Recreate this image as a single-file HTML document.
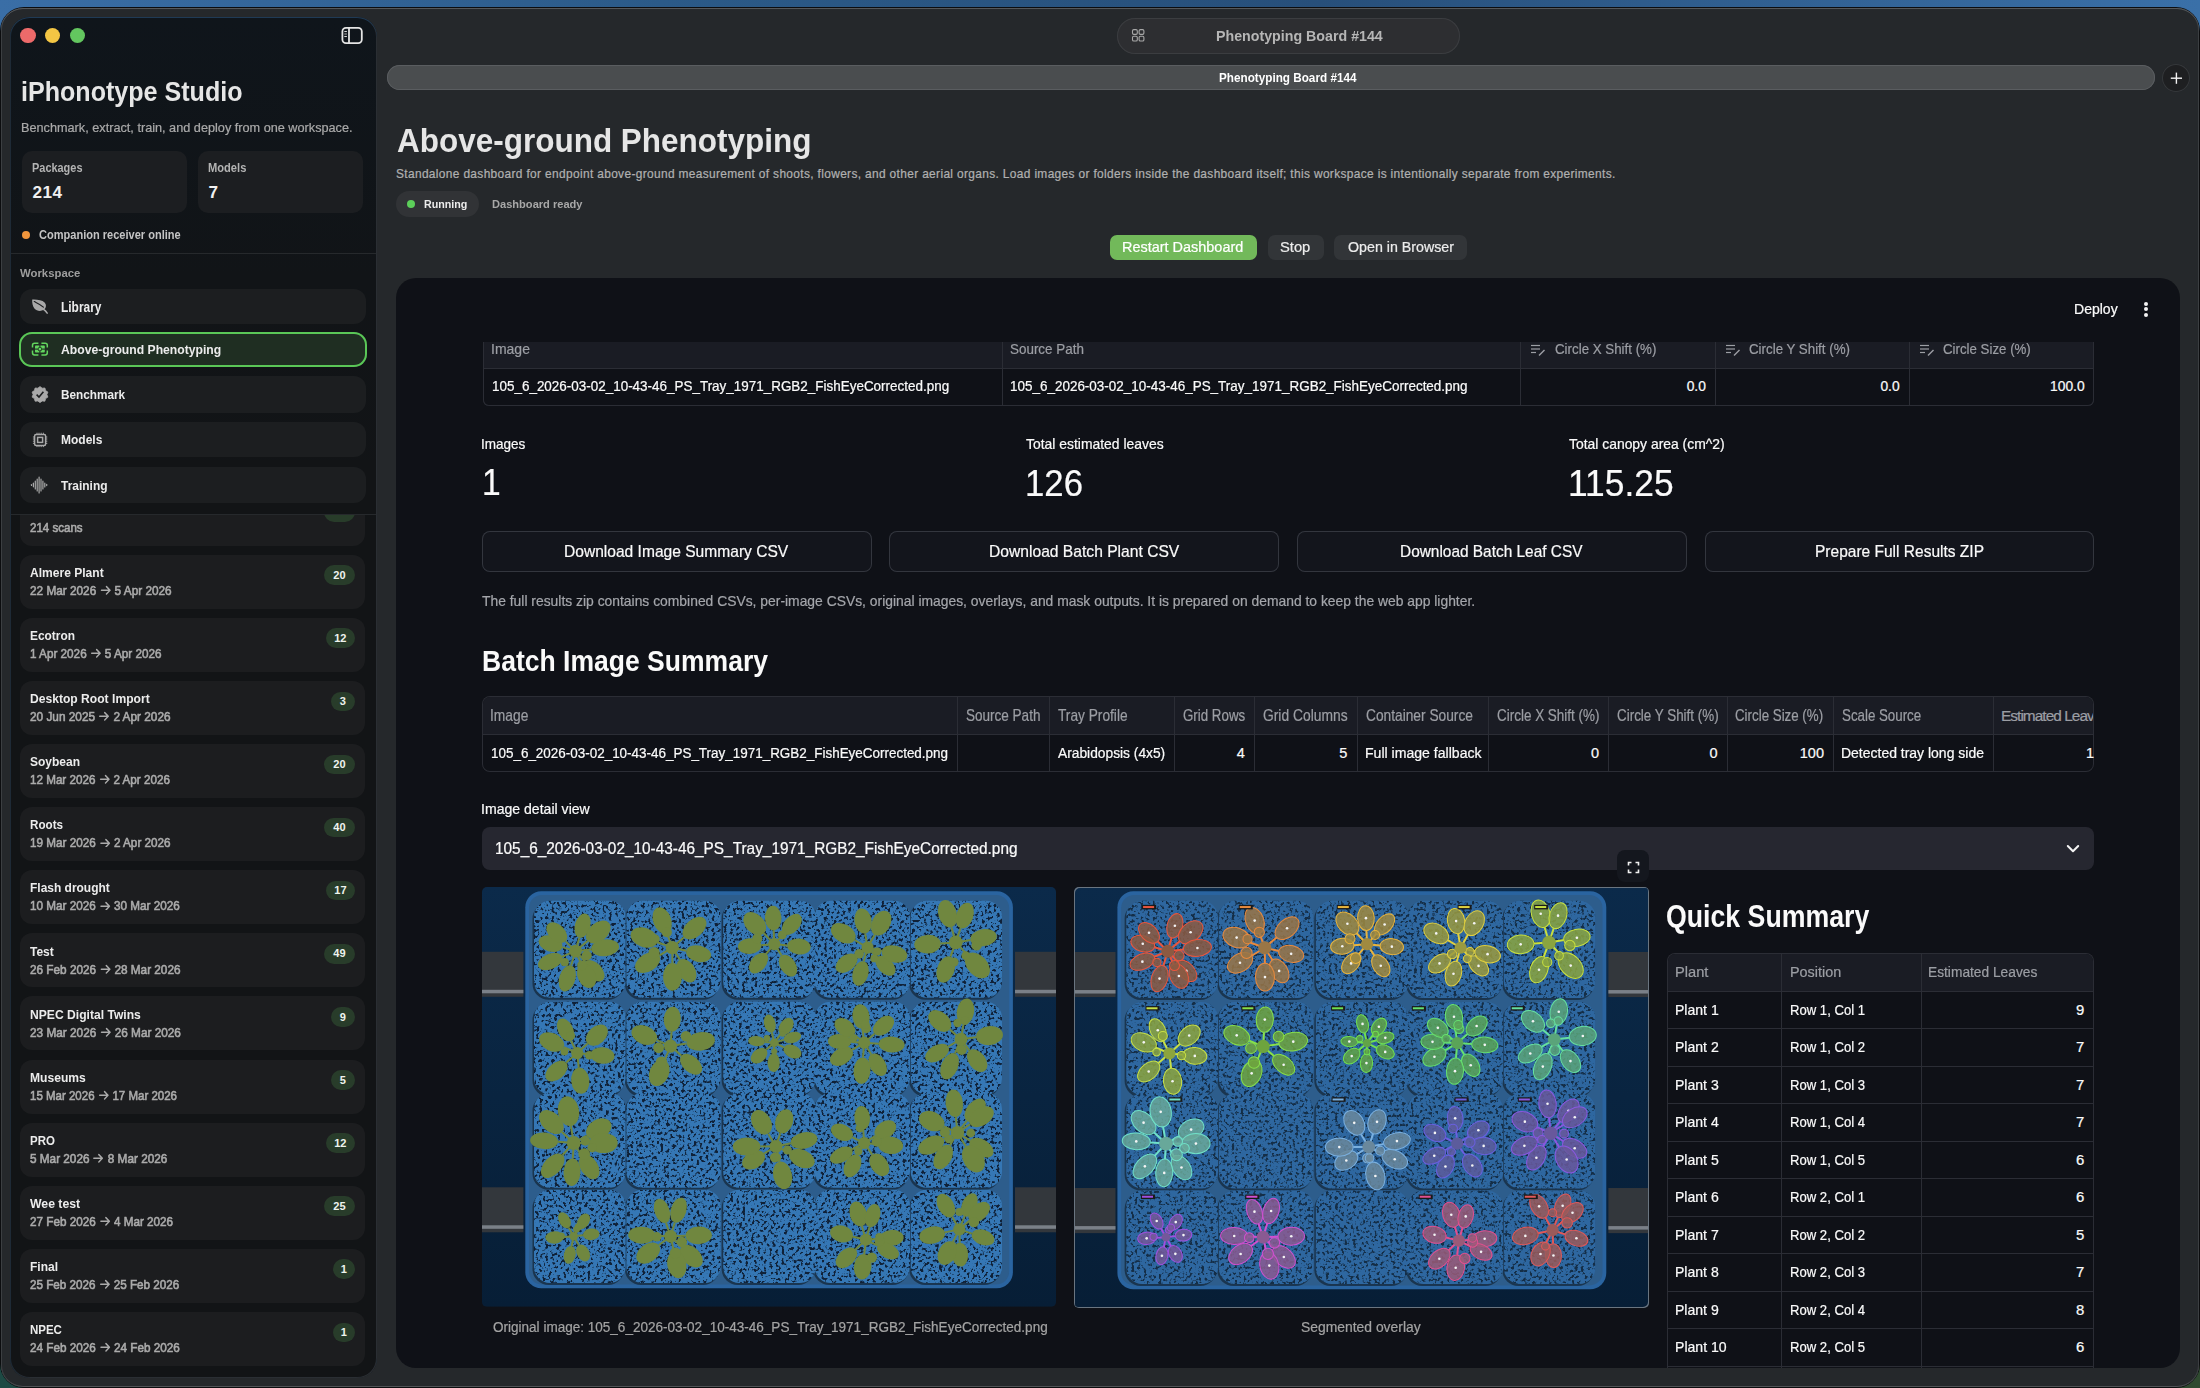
<!DOCTYPE html><html><head><meta charset="utf-8"><style>html,body{margin:0;padding:0;}body{width:2200px;height:1388px;position:relative;overflow:hidden;background:#25282b;font-family:"Liberation Sans",sans-serif;}.t{position:absolute;white-space:nowrap;}.arr{display:inline-block;width:1em;height:0.78em;vertical-align:baseline;}.arr svg{display:block;}</style></head><body><div style="position:absolute;left:0;top:0;width:2200px;height:1388px;background:linear-gradient(90deg,#3a6ea6 0%,#2b5a88 30%,#274f7a 60%,#3a70a8 100%);"></div><div style="position:absolute;left:0;top:1300px;width:2200px;height:88px;background:linear-gradient(90deg,#1d4a44 0%,#20302c 50%,#2f4a30 100%);"></div><div style="position:absolute;left:0px;top:7px;width:2200px;height:1381px;border-radius:24px;background:#0c0d0f;"></div><div style="position:absolute;left:1px;top:8px;width:2197.5px;height:1379px;border-radius:22px;background:#25282b;box-shadow:inset 0 1px 0 #55585b, inset 1px 0 0 #3c3f42, inset -1px 0 0 #3c3f42, inset 0 -1px 0 #505356;"></div><div style="position:absolute;left:9.5px;top:16.5px;width:367px;height:1361px;border-radius:20px;background:linear-gradient(180deg,#0f151b 0px,#111417 260px,#121416 520px);box-shadow:inset 0 1px 0 #1f3a55, inset 1px 0 0 #1e2a36, inset -1px 0 0 #2a2e33, inset 0 -1px 0 #2a2e33;overflow:hidden;"></div><div style="position:absolute;left:19.90px;top:491.60px;width:345.50px;height:54.00px;background:#1c1d1f;border-radius:12px;"></div><div style="position:absolute;left:324.00px;top:502.20px;width:31.00px;height:19.70px;background:#283c2a;border-radius:10px;"></div><span id="t0" class="t" style="left:30.30px;top:521.89px;font-size:12.65px;line-height:12.65px;color:#ababab;-webkit-text-stroke:0.22px currentColor;letter-spacing:0.000px;transform:scaleX(0.9120);transform-origin:0 0;-webkit-text-stroke:0.6px currentColor;">214 scans</span><div style="position:absolute;left:19.90px;top:554.70px;width:345.50px;height:54.00px;background:#1c1d1f;border-radius:12px;"></div><span id="t1" class="t" style="left:30.30px;top:565.90px;font-size:13.23px;line-height:13.23px;color:#ececec;font-weight:700;letter-spacing:0.000px;transform:scaleX(0.9115);transform-origin:0 0;">Almere Plant</span><span id="t2" class="t" style="left:30.30px;top:584.99px;font-size:12.65px;line-height:12.65px;color:#ababab;-webkit-text-stroke:0.22px currentColor;letter-spacing:0.000px;transform:scaleX(0.9332);transform-origin:0 0;-webkit-text-stroke:0.6px currentColor;">22 Mar 2026 <span class="arr"><svg viewBox="0 0 20 16" width="100%" height="100%" preserveAspectRatio="none"><path d="M2.5 8.6 H16.8 M11 2.6 L17 8.6 L11 14.6" stroke="currentColor" stroke-width="2.4" fill="none" stroke-linecap="round" stroke-linejoin="round"/></svg></span> 5 Apr 2026</span><div style="position:absolute;left:323.80px;top:565.30px;width:31.20px;height:19.70px;background:#283c2a;border-radius:10px;"></div><span id="t3" class="t" style="left:-160.60px;width:1000px;text-align:center;top:569.85px;font-size:11.05px;line-height:11.05px;color:#eef3ee;font-weight:700;letter-spacing:0.000px;">20</span><div style="position:absolute;left:19.90px;top:617.80px;width:345.50px;height:54.00px;background:#1c1d1f;border-radius:12px;"></div><span id="t4" class="t" style="left:30.30px;top:629.00px;font-size:13.23px;line-height:13.23px;color:#ececec;font-weight:700;letter-spacing:0.000px;transform:scaleX(0.9005);transform-origin:0 0;">Ecotron</span><span id="t5" class="t" style="left:30.30px;top:648.09px;font-size:12.65px;line-height:12.65px;color:#ababab;-webkit-text-stroke:0.22px currentColor;letter-spacing:0.000px;transform:scaleX(0.9263);transform-origin:0 0;-webkit-text-stroke:0.6px currentColor;">1 Apr 2026 <span class="arr"><svg viewBox="0 0 20 16" width="100%" height="100%" preserveAspectRatio="none"><path d="M2.5 8.6 H16.8 M11 2.6 L17 8.6 L11 14.6" stroke="currentColor" stroke-width="2.4" fill="none" stroke-linecap="round" stroke-linejoin="round"/></svg></span> 5 Apr 2026</span><div style="position:absolute;left:325.70px;top:628.40px;width:29.30px;height:19.70px;background:#283c2a;border-radius:10px;"></div><span id="t6" class="t" style="left:-159.65px;width:1000px;text-align:center;top:632.95px;font-size:11.05px;line-height:11.05px;color:#eef3ee;font-weight:700;letter-spacing:0.000px;">12</span><div style="position:absolute;left:19.90px;top:680.90px;width:345.50px;height:54.00px;background:#1c1d1f;border-radius:12px;"></div><span id="t7" class="t" style="left:30.30px;top:692.10px;font-size:13.23px;line-height:13.23px;color:#ececec;font-weight:700;letter-spacing:0.000px;transform:scaleX(0.9154);transform-origin:0 0;">Desktop Root Import</span><span id="t8" class="t" style="left:30.30px;top:711.19px;font-size:12.65px;line-height:12.65px;color:#ababab;-webkit-text-stroke:0.22px currentColor;letter-spacing:0.000px;transform:scaleX(0.9345);transform-origin:0 0;-webkit-text-stroke:0.6px currentColor;">20 Jun 2025 <span class="arr"><svg viewBox="0 0 20 16" width="100%" height="100%" preserveAspectRatio="none"><path d="M2.5 8.6 H16.8 M11 2.6 L17 8.6 L11 14.6" stroke="currentColor" stroke-width="2.4" fill="none" stroke-linecap="round" stroke-linejoin="round"/></svg></span> 2 Apr 2026</span><div style="position:absolute;left:330.60px;top:691.50px;width:24.40px;height:19.70px;background:#283c2a;border-radius:10px;"></div><span id="t9" class="t" style="left:-157.20px;width:1000px;text-align:center;top:696.05px;font-size:11.05px;line-height:11.05px;color:#eef3ee;font-weight:700;letter-spacing:0.000px;">3</span><div style="position:absolute;left:19.90px;top:744.00px;width:345.50px;height:54.00px;background:#1c1d1f;border-radius:12px;"></div><span id="t10" class="t" style="left:30.30px;top:755.20px;font-size:13.23px;line-height:13.23px;color:#ececec;font-weight:700;letter-spacing:0.000px;transform:scaleX(0.9087);transform-origin:0 0;">Soybean</span><span id="t11" class="t" style="left:30.30px;top:774.29px;font-size:12.65px;line-height:12.65px;color:#ababab;-webkit-text-stroke:0.22px currentColor;letter-spacing:0.000px;transform:scaleX(0.9214);transform-origin:0 0;-webkit-text-stroke:0.6px currentColor;">12 Mar 2026 <span class="arr"><svg viewBox="0 0 20 16" width="100%" height="100%" preserveAspectRatio="none"><path d="M2.5 8.6 H16.8 M11 2.6 L17 8.6 L11 14.6" stroke="currentColor" stroke-width="2.4" fill="none" stroke-linecap="round" stroke-linejoin="round"/></svg></span> 2 Apr 2026</span><div style="position:absolute;left:323.80px;top:754.60px;width:31.20px;height:19.70px;background:#283c2a;border-radius:10px;"></div><span id="t12" class="t" style="left:-160.60px;width:1000px;text-align:center;top:759.15px;font-size:11.05px;line-height:11.05px;color:#eef3ee;font-weight:700;letter-spacing:0.000px;">20</span><div style="position:absolute;left:19.90px;top:807.10px;width:345.50px;height:54.00px;background:#1c1d1f;border-radius:12px;"></div><span id="t13" class="t" style="left:30.30px;top:818.30px;font-size:13.23px;line-height:13.23px;color:#ececec;font-weight:700;letter-spacing:0.000px;transform:scaleX(0.8815);transform-origin:0 0;">Roots</span><span id="t14" class="t" style="left:30.30px;top:837.39px;font-size:12.65px;line-height:12.65px;color:#ababab;-webkit-text-stroke:0.22px currentColor;letter-spacing:0.000px;transform:scaleX(0.9260);transform-origin:0 0;-webkit-text-stroke:0.6px currentColor;">19 Mar 2026 <span class="arr"><svg viewBox="0 0 20 16" width="100%" height="100%" preserveAspectRatio="none"><path d="M2.5 8.6 H16.8 M11 2.6 L17 8.6 L11 14.6" stroke="currentColor" stroke-width="2.4" fill="none" stroke-linecap="round" stroke-linejoin="round"/></svg></span> 2 Apr 2026</span><div style="position:absolute;left:323.80px;top:817.70px;width:31.20px;height:19.70px;background:#283c2a;border-radius:10px;"></div><span id="t15" class="t" style="left:-160.60px;width:1000px;text-align:center;top:822.25px;font-size:11.05px;line-height:11.05px;color:#eef3ee;font-weight:700;letter-spacing:0.000px;">40</span><div style="position:absolute;left:19.90px;top:870.20px;width:345.50px;height:54.00px;background:#1c1d1f;border-radius:12px;"></div><span id="t16" class="t" style="left:30.30px;top:881.40px;font-size:13.23px;line-height:13.23px;color:#ececec;font-weight:700;letter-spacing:0.000px;transform:scaleX(0.9052);transform-origin:0 0;">Flash drought</span><span id="t17" class="t" style="left:30.30px;top:900.49px;font-size:12.65px;line-height:12.65px;color:#ababab;-webkit-text-stroke:0.22px currentColor;letter-spacing:0.000px;transform:scaleX(0.9269);transform-origin:0 0;-webkit-text-stroke:0.6px currentColor;">10 Mar 2026 <span class="arr"><svg viewBox="0 0 20 16" width="100%" height="100%" preserveAspectRatio="none"><path d="M2.5 8.6 H16.8 M11 2.6 L17 8.6 L11 14.6" stroke="currentColor" stroke-width="2.4" fill="none" stroke-linecap="round" stroke-linejoin="round"/></svg></span> 30 Mar 2026</span><div style="position:absolute;left:325.80px;top:880.80px;width:29.20px;height:19.70px;background:#283c2a;border-radius:10px;"></div><span id="t18" class="t" style="left:-159.60px;width:1000px;text-align:center;top:885.35px;font-size:11.05px;line-height:11.05px;color:#eef3ee;font-weight:700;letter-spacing:0.000px;">17</span><div style="position:absolute;left:19.90px;top:933.30px;width:345.50px;height:54.00px;background:#1c1d1f;border-radius:12px;"></div><span id="t19" class="t" style="left:30.30px;top:944.50px;font-size:13.23px;line-height:13.23px;color:#ececec;font-weight:700;letter-spacing:0.000px;transform:scaleX(0.9068);transform-origin:0 0;">Test</span><span id="t20" class="t" style="left:30.30px;top:963.59px;font-size:12.65px;line-height:12.65px;color:#ababab;-webkit-text-stroke:0.22px currentColor;letter-spacing:0.000px;transform:scaleX(0.9312);transform-origin:0 0;-webkit-text-stroke:0.6px currentColor;">26 Feb 2026 <span class="arr"><svg viewBox="0 0 20 16" width="100%" height="100%" preserveAspectRatio="none"><path d="M2.5 8.6 H16.8 M11 2.6 L17 8.6 L11 14.6" stroke="currentColor" stroke-width="2.4" fill="none" stroke-linecap="round" stroke-linejoin="round"/></svg></span> 28 Mar 2026</span><div style="position:absolute;left:323.80px;top:943.90px;width:31.20px;height:19.70px;background:#283c2a;border-radius:10px;"></div><span id="t21" class="t" style="left:-160.60px;width:1000px;text-align:center;top:948.45px;font-size:11.05px;line-height:11.05px;color:#eef3ee;font-weight:700;letter-spacing:0.000px;">49</span><div style="position:absolute;left:19.90px;top:996.40px;width:345.50px;height:54.00px;background:#1c1d1f;border-radius:12px;"></div><span id="t22" class="t" style="left:30.30px;top:1007.60px;font-size:13.23px;line-height:13.23px;color:#ececec;font-weight:700;letter-spacing:0.000px;transform:scaleX(0.9164);transform-origin:0 0;">NPEC Digital Twins</span><span id="t23" class="t" style="left:30.30px;top:1026.69px;font-size:12.65px;line-height:12.65px;color:#ababab;-webkit-text-stroke:0.22px currentColor;letter-spacing:0.000px;transform:scaleX(0.9338);transform-origin:0 0;-webkit-text-stroke:0.6px currentColor;">23 Mar 2026 <span class="arr"><svg viewBox="0 0 20 16" width="100%" height="100%" preserveAspectRatio="none"><path d="M2.5 8.6 H16.8 M11 2.6 L17 8.6 L11 14.6" stroke="currentColor" stroke-width="2.4" fill="none" stroke-linecap="round" stroke-linejoin="round"/></svg></span> 26 Mar 2026</span><div style="position:absolute;left:330.60px;top:1007.00px;width:24.40px;height:19.70px;background:#283c2a;border-radius:10px;"></div><span id="t24" class="t" style="left:-157.20px;width:1000px;text-align:center;top:1011.55px;font-size:11.05px;line-height:11.05px;color:#eef3ee;font-weight:700;letter-spacing:0.000px;">9</span><div style="position:absolute;left:19.90px;top:1059.50px;width:345.50px;height:54.00px;background:#1c1d1f;border-radius:12px;"></div><span id="t25" class="t" style="left:30.30px;top:1070.70px;font-size:13.23px;line-height:13.23px;color:#ececec;font-weight:700;letter-spacing:0.000px;transform:scaleX(0.9139);transform-origin:0 0;">Museums</span><span id="t26" class="t" style="left:30.30px;top:1089.79px;font-size:12.65px;line-height:12.65px;color:#ababab;-webkit-text-stroke:0.22px currentColor;letter-spacing:0.000px;transform:scaleX(0.9096);transform-origin:0 0;-webkit-text-stroke:0.6px currentColor;">15 Mar 2026 <span class="arr"><svg viewBox="0 0 20 16" width="100%" height="100%" preserveAspectRatio="none"><path d="M2.5 8.6 H16.8 M11 2.6 L17 8.6 L11 14.6" stroke="currentColor" stroke-width="2.4" fill="none" stroke-linecap="round" stroke-linejoin="round"/></svg></span> 17 Mar 2026</span><div style="position:absolute;left:330.80px;top:1070.10px;width:24.20px;height:19.70px;background:#283c2a;border-radius:10px;"></div><span id="t27" class="t" style="left:-157.10px;width:1000px;text-align:center;top:1074.65px;font-size:11.05px;line-height:11.05px;color:#eef3ee;font-weight:700;letter-spacing:0.000px;">5</span><div style="position:absolute;left:19.90px;top:1122.60px;width:345.50px;height:54.00px;background:#1c1d1f;border-radius:12px;"></div><span id="t28" class="t" style="left:30.30px;top:1133.80px;font-size:13.23px;line-height:13.23px;color:#ececec;font-weight:700;letter-spacing:0.000px;transform:scaleX(0.8709);transform-origin:0 0;">PRO</span><span id="t29" class="t" style="left:30.30px;top:1152.89px;font-size:12.65px;line-height:12.65px;color:#ababab;-webkit-text-stroke:0.22px currentColor;letter-spacing:0.000px;transform:scaleX(0.9304);transform-origin:0 0;-webkit-text-stroke:0.6px currentColor;">5 Mar 2026 <span class="arr"><svg viewBox="0 0 20 16" width="100%" height="100%" preserveAspectRatio="none"><path d="M2.5 8.6 H16.8 M11 2.6 L17 8.6 L11 14.6" stroke="currentColor" stroke-width="2.4" fill="none" stroke-linecap="round" stroke-linejoin="round"/></svg></span> 8 Mar 2026</span><div style="position:absolute;left:325.70px;top:1133.20px;width:29.30px;height:19.70px;background:#283c2a;border-radius:10px;"></div><span id="t30" class="t" style="left:-159.65px;width:1000px;text-align:center;top:1137.75px;font-size:11.05px;line-height:11.05px;color:#eef3ee;font-weight:700;letter-spacing:0.000px;">12</span><div style="position:absolute;left:19.90px;top:1185.70px;width:345.50px;height:54.00px;background:#1c1d1f;border-radius:12px;"></div><span id="t31" class="t" style="left:30.30px;top:1196.90px;font-size:13.23px;line-height:13.23px;color:#ececec;font-weight:700;letter-spacing:0.000px;transform:scaleX(0.9266);transform-origin:0 0;">Wee test</span><span id="t32" class="t" style="left:30.30px;top:1215.99px;font-size:12.65px;line-height:12.65px;color:#ababab;-webkit-text-stroke:0.22px currentColor;letter-spacing:0.000px;transform:scaleX(0.9256);transform-origin:0 0;-webkit-text-stroke:0.6px currentColor;">27 Feb 2026 <span class="arr"><svg viewBox="0 0 20 16" width="100%" height="100%" preserveAspectRatio="none"><path d="M2.5 8.6 H16.8 M11 2.6 L17 8.6 L11 14.6" stroke="currentColor" stroke-width="2.4" fill="none" stroke-linecap="round" stroke-linejoin="round"/></svg></span> 4 Mar 2026</span><div style="position:absolute;left:323.80px;top:1196.30px;width:31.20px;height:19.70px;background:#283c2a;border-radius:10px;"></div><span id="t33" class="t" style="left:-160.60px;width:1000px;text-align:center;top:1200.85px;font-size:11.05px;line-height:11.05px;color:#eef3ee;font-weight:700;letter-spacing:0.000px;">25</span><div style="position:absolute;left:19.90px;top:1248.80px;width:345.50px;height:54.00px;background:#1c1d1f;border-radius:12px;"></div><span id="t34" class="t" style="left:30.30px;top:1260.00px;font-size:13.23px;line-height:13.23px;color:#ececec;font-weight:700;letter-spacing:0.000px;transform:scaleX(0.9081);transform-origin:0 0;">Final</span><span id="t35" class="t" style="left:30.30px;top:1279.09px;font-size:12.65px;line-height:12.65px;color:#ababab;-webkit-text-stroke:0.22px currentColor;letter-spacing:0.000px;transform:scaleX(0.9231);transform-origin:0 0;-webkit-text-stroke:0.6px currentColor;">25 Feb 2026 <span class="arr"><svg viewBox="0 0 20 16" width="100%" height="100%" preserveAspectRatio="none"><path d="M2.5 8.6 H16.8 M11 2.6 L17 8.6 L11 14.6" stroke="currentColor" stroke-width="2.4" fill="none" stroke-linecap="round" stroke-linejoin="round"/></svg></span> 25 Feb 2026</span><div style="position:absolute;left:332.60px;top:1259.40px;width:22.40px;height:19.70px;background:#283c2a;border-radius:10px;"></div><span id="t36" class="t" style="left:-156.20px;width:1000px;text-align:center;top:1263.95px;font-size:11.05px;line-height:11.05px;color:#eef3ee;font-weight:700;letter-spacing:0.000px;">1</span><div style="position:absolute;left:19.90px;top:1311.90px;width:345.50px;height:54.00px;background:#1c1d1f;border-radius:12px;"></div><span id="t37" class="t" style="left:30.30px;top:1323.10px;font-size:13.23px;line-height:13.23px;color:#ececec;font-weight:700;letter-spacing:0.000px;transform:scaleX(0.8688);transform-origin:0 0;">NPEC</span><span id="t38" class="t" style="left:30.30px;top:1342.19px;font-size:12.65px;line-height:12.65px;color:#ababab;-webkit-text-stroke:0.22px currentColor;letter-spacing:0.000px;transform:scaleX(0.9268);transform-origin:0 0;-webkit-text-stroke:0.6px currentColor;">24 Feb 2026 <span class="arr"><svg viewBox="0 0 20 16" width="100%" height="100%" preserveAspectRatio="none"><path d="M2.5 8.6 H16.8 M11 2.6 L17 8.6 L11 14.6" stroke="currentColor" stroke-width="2.4" fill="none" stroke-linecap="round" stroke-linejoin="round"/></svg></span> 24 Feb 2026</span><div style="position:absolute;left:332.60px;top:1322.50px;width:22.40px;height:19.70px;background:#283c2a;border-radius:10px;"></div><span id="t39" class="t" style="left:-156.20px;width:1000px;text-align:center;top:1327.05px;font-size:11.05px;line-height:11.05px;color:#eef3ee;font-weight:700;letter-spacing:0.000px;">1</span><div style="position:absolute;left:10.5px;top:460px;width:365px;height:54.6px;background:#121416;"></div><div style="position:absolute;left:10.50px;top:514.10px;width:365.00px;height:1.00px;background:#26292c;border-radius:0px;"></div><div style="position:absolute;left:20.40px;top:27.90px;width:15.2px;height:15.2px;border-radius:50%;background:#ed6a6a;"></div><div style="position:absolute;left:45.10px;top:27.90px;width:15.2px;height:15.2px;border-radius:50%;background:#f4c644;"></div><div style="position:absolute;left:69.70px;top:27.90px;width:15.2px;height:15.2px;border-radius:50%;background:#63c65f;"></div><svg style="position:absolute;left:340px;top:26px;" width="24" height="20" viewBox="0 0 24 20"><rect x="2.4" y="1.9" width="19.4" height="15.2" rx="3.6" fill="none" stroke="#e4e4e4" stroke-width="1.8"/><line x1="9" y1="2" x2="9" y2="17" stroke="#e4e4e4" stroke-width="1.8"/><line x1="4.3" y1="5.5" x2="6.9" y2="5.5" stroke="#d8d8d8" stroke-width="1.1"/><line x1="4.3" y1="8" x2="6.9" y2="8" stroke="#a8a8a8" stroke-width="1.1"/><line x1="4.3" y1="10.5" x2="6.9" y2="10.5" stroke="#d8d8d8" stroke-width="1.1"/></svg><span id="t40" class="t" style="left:20.71px;top:77.13px;font-size:28.20px;line-height:28.20px;color:#e6e6e6;font-weight:700;letter-spacing:0.000px;transform:scaleX(0.8896);transform-origin:0 0;">iPhonotype Studio</span><span id="t41" class="t" style="left:21.01px;top:121.97px;font-size:12.79px;line-height:12.79px;color:#a9a9a9;-webkit-text-stroke:0.22px currentColor;letter-spacing:0.000px;transform:scaleX(0.9930);transform-origin:0 0;">Benchmark, extract, train, and deploy from one workspace.</span><div style="position:absolute;left:21.60px;top:151.00px;width:165.40px;height:61.70px;background:#1c1e21;border-radius:10px;"></div><div style="position:absolute;left:198.00px;top:151.00px;width:165.40px;height:61.70px;background:#1c1e21;border-radius:10px;"></div><span id="t42" class="t" style="left:32.40px;top:162.06px;font-size:12.21px;line-height:12.21px;color:#b3b3b3;font-weight:700;letter-spacing:0.000px;transform:scaleX(0.8961);transform-origin:0 0;">Packages</span><span id="t43" class="t" style="left:32.40px;top:184.28px;font-size:17.15px;line-height:17.15px;color:#f0f0f0;font-weight:700;letter-spacing:0.567px;">214</span><span id="t44" class="t" style="left:208.40px;top:162.06px;font-size:12.21px;line-height:12.21px;color:#b3b3b3;font-weight:700;letter-spacing:0.000px;transform:scaleX(0.9122);transform-origin:0 0;">Models</span><span id="t45" class="t" style="left:208.40px;top:184.28px;font-size:17.15px;line-height:17.15px;color:#f0f0f0;font-weight:700;letter-spacing:0.000px;">7</span><div style="position:absolute;left:21.7px;top:230.7px;width:8.6px;height:8.6px;border-radius:50%;background:#f0953c;"></div><span id="t46" class="t" style="left:39.00px;top:228.79px;font-size:12.06px;line-height:12.06px;color:#c4c4c4;font-weight:700;letter-spacing:0.000px;transform:scaleX(0.9165);transform-origin:0 0;">Companion receiver online</span><div style="position:absolute;left:10.50px;top:252.60px;width:365.00px;height:1.00px;background:#26292c;border-radius:0px;"></div><span id="t47" class="t" style="left:19.90px;top:267.58px;font-size:11.48px;line-height:11.48px;color:#9e9e9e;font-weight:700;letter-spacing:0.000px;transform:scaleX(0.9900);transform-origin:0 0;">Workspace</span><div style="position:absolute;left:20.00px;top:289.40px;width:346.00px;height:34.20px;background:#1c1e20;border-radius:12px;"></div><span id="t48" class="t" style="left:60.50px;top:299.54px;font-size:14.24px;line-height:14.24px;color:#ececec;font-weight:700;letter-spacing:0.000px;transform:scaleX(0.8378);transform-origin:0 0;">Library</span><div style="position:absolute;left:19px;top:332px;width:347.5px;height:35px;border-radius:13px;background:#1f2e22;box-shadow:inset 0 0 0 2px #5ac757;"></div><span id="t49" class="t" style="left:60.50px;top:342.85px;font-size:13.52px;line-height:13.52px;color:#ececec;font-weight:700;letter-spacing:0.000px;transform:scaleX(0.9003);transform-origin:0 0;">Above-ground Phenotyping</span><div style="position:absolute;left:20.00px;top:375.50px;width:346.00px;height:37.00px;background:#1c1e20;border-radius:12px;"></div><span id="t50" class="t" style="left:60.50px;top:387.92px;font-size:13.08px;line-height:13.08px;color:#ececec;font-weight:700;letter-spacing:0.000px;transform:scaleX(0.9005);transform-origin:0 0;">Benchmark</span><div style="position:absolute;left:20.00px;top:421.70px;width:346.00px;height:35.60px;background:#1c1e20;border-radius:12px;"></div><span id="t51" class="t" style="left:60.50px;top:433.20px;font-size:13.23px;line-height:13.23px;color:#ececec;font-weight:700;letter-spacing:0.000px;transform:scaleX(0.9074);transform-origin:0 0;">Models</span><div style="position:absolute;left:20.00px;top:466.60px;width:346.00px;height:36.10px;background:#1c1e20;border-radius:12px;"></div><span id="t52" class="t" style="left:60.50px;top:478.62px;font-size:13.08px;line-height:13.08px;color:#ececec;font-weight:700;letter-spacing:0.000px;transform:scaleX(0.9140);transform-origin:0 0;">Training</span><svg style="position:absolute;left:31px;top:298px;" width="18" height="17" viewBox="0 0 18 17"><path d="M1.2 1.6 C6 1.4 11.2 2 13.6 4.6 C15.6 6.8 15.4 10.2 12.8 11.8 C10 13.6 5.6 13.2 3.4 10.4 C1.6 8.2 1 5 1.2 1.6 Z" fill="#a9a9a9"/><path d="M3.2 3.6 C6.4 5.2 9.6 6.4 12.4 9.2" stroke="#1c1e20" stroke-width="1.1" fill="none" stroke-linecap="round"/><path d="M12.2 11.2 C13.8 12.2 15.2 13.6 16.2 15.2" stroke="#a9a9a9" stroke-width="1.5" fill="none" stroke-linecap="round"/></svg><svg style="position:absolute;left:31px;top:342px;" width="18" height="15" viewBox="0 0 18 15"><path d="M1.5 5.6 V3.4 Q1.5 1.3 3.6 1.3 H7.4 M10.4 1.3 H14.2 Q16.3 1.3 16.3 3.4 V5.6 M16.3 8.6 V10.8 Q16.3 12.9 14.2 12.9 H10.4 M7.4 12.9 H3.6 Q1.5 12.9 1.5 10.8 V8.6" stroke="#62d45e" stroke-width="1.5" fill="none"/><rect x="4" y="3.6" width="9.8" height="7" rx="0.8" fill="#62d45e"/><line x1="8.9" y1="3" x2="8.9" y2="11.2" stroke="#1f2e22" stroke-width="1.1"/><line x1="3.6" y1="7.1" x2="14.2" y2="7.1" stroke="#1f2e22" stroke-width="1.1"/><circle cx="8.9" cy="7.1" r="2.2" fill="#1f2e22"/><circle cx="8.9" cy="7.1" r="1.4" fill="#62d45e"/></svg><svg style="position:absolute;left:31px;top:386px;" width="18" height="17" viewBox="0 0 18 17"><path d="M9 0.6 L11.2 2.2 L13.9 2 L14.6 4.6 L16.9 6.1 L15.9 8.6 L16.9 11.1 L14.6 12.6 L13.9 15.2 L11.2 15 L9 16.6 L6.8 15 L4.1 15.2 L3.4 12.6 L1.1 11.1 L2.1 8.6 L1.1 6.1 L3.4 4.6 L4.1 2 L6.8 2.2 Z" fill="#a9a9a9" stroke="#a9a9a9" stroke-width="0.8" stroke-linejoin="round"/><path d="M5.6 8.6 L8 11 L12.4 5.8" stroke="#1c1e20" stroke-width="1.6" fill="none"/></svg><svg style="position:absolute;left:31px;top:431px;" width="18" height="17" viewBox="0 0 18 17"><rect x="3.6" y="3.4" width="11" height="11" rx="1.5" fill="none" stroke="#a9a9a9" stroke-width="1.5"/><rect x="6.6" y="6.4" width="5" height="5" fill="none" stroke="#a9a9a9" stroke-width="1.5"/><line x1="6" y1="1.7" x2="6" y2="3.4" stroke="#a9a9a9" stroke-width="0.9"/><line x1="6" y1="14.4" x2="6" y2="16.1" stroke="#a9a9a9" stroke-width="0.9"/><line x1="8" y1="1.7" x2="8" y2="3.4" stroke="#a9a9a9" stroke-width="0.9"/><line x1="8" y1="14.4" x2="8" y2="16.1" stroke="#a9a9a9" stroke-width="0.9"/><line x1="10.2" y1="1.7" x2="10.2" y2="3.4" stroke="#a9a9a9" stroke-width="0.9"/><line x1="10.2" y1="14.4" x2="10.2" y2="16.1" stroke="#a9a9a9" stroke-width="0.9"/><line x1="12.4" y1="1.7" x2="12.4" y2="3.4" stroke="#a9a9a9" stroke-width="0.9"/><line x1="12.4" y1="14.4" x2="12.4" y2="16.1" stroke="#a9a9a9" stroke-width="0.9"/><line x1="1.9" y1="6" x2="3.6" y2="6" stroke="#a9a9a9" stroke-width="0.9"/><line x1="14.6" y1="6" x2="16.3" y2="6" stroke="#a9a9a9" stroke-width="0.9"/><line x1="1.9" y1="8" x2="3.6" y2="8" stroke="#a9a9a9" stroke-width="0.9"/><line x1="14.6" y1="8" x2="16.3" y2="8" stroke="#a9a9a9" stroke-width="0.9"/><line x1="1.9" y1="10.2" x2="3.6" y2="10.2" stroke="#a9a9a9" stroke-width="0.9"/><line x1="14.6" y1="10.2" x2="16.3" y2="10.2" stroke="#a9a9a9" stroke-width="0.9"/><line x1="1.9" y1="12.4" x2="3.6" y2="12.4" stroke="#a9a9a9" stroke-width="0.9"/><line x1="14.6" y1="12.4" x2="16.3" y2="12.4" stroke="#a9a9a9" stroke-width="0.9"/></svg><svg style="position:absolute;left:30px;top:476px;" width="20" height="18" viewBox="0 0 20 18"><line x1="1.5" y1="8.6" x2="1.5" y2="9.4" stroke="#a9a9a9" stroke-width="1.2" stroke-linecap="round"/><line x1="3.4" y1="7.2" x2="3.4" y2="10.8" stroke="#a9a9a9" stroke-width="1.2" stroke-linecap="round"/><line x1="5.3" y1="5" x2="5.3" y2="13" stroke="#a9a9a9" stroke-width="1.2" stroke-linecap="round"/><line x1="7.2" y1="3" x2="7.2" y2="15" stroke="#a9a9a9" stroke-width="1.2" stroke-linecap="round"/><line x1="9.1" y1="1" x2="9.1" y2="17" stroke="#a9a9a9" stroke-width="1.2" stroke-linecap="round"/><line x1="11" y1="3" x2="11" y2="15" stroke="#a9a9a9" stroke-width="1.2" stroke-linecap="round"/><line x1="12.9" y1="5" x2="12.9" y2="13" stroke="#a9a9a9" stroke-width="1.2" stroke-linecap="round"/><line x1="14.8" y1="7" x2="14.8" y2="11" stroke="#a9a9a9" stroke-width="1.2" stroke-linecap="round"/><line x1="16.7" y1="8.4" x2="16.7" y2="9.6" stroke="#a9a9a9" stroke-width="1.2" stroke-linecap="round"/></svg><div style="position:absolute;left:1117.4px;top:17.9px;width:342.8px;height:36.3px;border-radius:18.2px;background:#2d2e31;box-shadow:inset 0 0 0 1px #3b3d40;"></div><svg style="position:absolute;left:1131px;top:28px;" width="16" height="16" viewBox="0 0 16 16"><rect x="1.5" y="1.6" width="4.8" height="4.8" rx="1.3" fill="none" stroke="#a8a8a8" stroke-width="1.1"/><rect x="1.5" y="8.2" width="4.8" height="4.8" rx="1.3" fill="none" stroke="#a8a8a8" stroke-width="1.1"/><rect x="8.1" y="1.6" width="4.8" height="4.8" rx="1.3" fill="none" stroke="#a8a8a8" stroke-width="1.1"/><rect x="8.1" y="8.2" width="4.8" height="4.8" rx="1.3" fill="none" stroke="#a8a8a8" stroke-width="1.1"/></svg><span id="t53" class="t" style="left:1216.28px;top:28.05px;font-size:15.41px;line-height:15.41px;color:#b6b6b6;font-weight:700;letter-spacing:0.000px;transform:scaleX(0.9233);transform-origin:0 0;">Phenotyping Board #144</span><div style="position:absolute;left:387.2px;top:65.3px;width:1767.6px;height:25.2px;border-radius:13px;background:#4a4d4f;box-shadow:inset 0 0 0 1px #5a5d60;"></div><span id="t54" class="t" style="left:1218.80px;top:72.22px;font-size:12.50px;line-height:12.50px;color:#ffffff;font-weight:700;letter-spacing:0.000px;transform:scaleX(0.9379);transform-origin:0 0;">Phenotyping Board #144</span><div style="position:absolute;left:2162.4px;top:64px;width:28px;height:28px;border-radius:50%;background:#1e1f21;box-shadow:inset 0 0 0 1px #35383b;"></div><svg style="position:absolute;left:2168px;top:70px;" width="17" height="17" viewBox="0 0 17 17"><line x1="8.4" y1="2.6" x2="8.4" y2="13.8" stroke="#f2f2f2" stroke-width="1.4"/><line x1="2.8" y1="8.2" x2="14" y2="8.2" stroke="#f2f2f2" stroke-width="1.4"/></svg><span id="t55" class="t" style="left:397.00px;top:123.75px;font-size:33.72px;line-height:33.72px;color:#e6e6e6;font-weight:700;letter-spacing:0.000px;transform:scaleX(0.9337);transform-origin:0 0;">Above-ground Phenotyping</span><span id="t56" class="t" style="left:396.00px;top:168.81px;font-size:11.92px;line-height:11.92px;color:#b0b0b0;-webkit-text-stroke:0.22px currentColor;letter-spacing:0.349px;">Standalone dashboard for endpoint above-ground measurement of shoots, flowers, and other aerial organs. Load images or folders inside the dashboard itself; this workspace is intentionally separate from experiments.</span><div style="position:absolute;left:396.20px;top:190.90px;width:82.70px;height:26.20px;background:#313336;border-radius:13px;"></div><div style="position:absolute;left:406.6px;top:199.8px;width:8.6px;height:8.6px;border-radius:50%;background:#5ccf5a;"></div><span id="t57" class="t" style="left:424.30px;top:198.15px;font-size:11.63px;line-height:11.63px;color:#ececec;font-weight:700;letter-spacing:0.000px;transform:scaleX(0.9196);transform-origin:0 0;">Running</span><span id="t58" class="t" style="left:492.10px;top:198.15px;font-size:11.63px;line-height:11.63px;color:#a8a8a8;font-weight:700;letter-spacing:0.000px;transform:scaleX(0.9530);transform-origin:0 0;">Dashboard ready</span><div style="position:absolute;left:1109.50px;top:234.50px;width:147.30px;height:25.50px;background:#72b95a;border-radius:7px;"></div><div style="position:absolute;left:1267.50px;top:234.50px;width:56.20px;height:25.50px;background:#323538;border-radius:7px;"></div><div style="position:absolute;left:1334.40px;top:234.50px;width:132.30px;height:25.50px;background:#323538;border-radius:7px;"></div><span id="t59" class="t" style="left:1122.03px;top:239.92px;font-size:14.97px;line-height:14.97px;color:#ffffff;-webkit-text-stroke:0.22px currentColor;letter-spacing:0.000px;transform:scaleX(0.9653);transform-origin:0 0;">Restart Dashboard</span><span id="t60" class="t" style="left:1280.00px;top:239.92px;font-size:14.97px;line-height:14.97px;color:#ececec;-webkit-text-stroke:0.22px currentColor;letter-spacing:0.000px;transform:scaleX(0.9846);transform-origin:0 0;">Stop</span><span id="t61" class="t" style="left:1347.50px;top:239.92px;font-size:14.97px;line-height:14.97px;color:#ececec;-webkit-text-stroke:0.22px currentColor;letter-spacing:0.000px;transform:scaleX(0.9507);transform-origin:0 0;">Open in Browser</span><div style="position:absolute;left:396.00px;top:277.50px;width:1784.00px;height:1090.50px;background:#0f1117;border-radius:20px;"></div><span id="t62" class="t" style="left:2074.29px;top:300.95px;font-size:15.41px;line-height:15.41px;color:#fafafa;-webkit-text-stroke:0.22px currentColor;letter-spacing:0.000px;transform:scaleX(0.9108);transform-origin:0 0;">Deploy</span><div style="position:absolute;left:2144.20px;top:301.90px;width:4.2px;height:4.2px;border-radius:50%;background:#f2f2f2;"></div><div style="position:absolute;left:2144.20px;top:307.30px;width:4.2px;height:4.2px;border-radius:50%;background:#f2f2f2;"></div><div style="position:absolute;left:2144.20px;top:312.70px;width:4.2px;height:4.2px;border-radius:50%;background:#f2f2f2;"></div><div style="position:absolute;left:482.50px;top:341.60px;width:1611.10px;height:64.30px;border-radius:0 0 6px 6px;background:#0f1117;box-shadow:inset 1px 0 0 #2b2d35,inset -1px 0 0 #2b2d35,inset 0 -1px 0 #2b2d35;"></div><div style="position:absolute;left:483.50px;top:341.60px;width:1609.10px;height:27.30px;background:#1a1c24;border-radius:0px;"></div><div style="position:absolute;left:482.50px;top:368.40px;width:1611.10px;height:1.00px;background:#2b2d35;border-radius:0px;"></div><div style="position:absolute;left:1001.70px;top:341.60px;width:1.00px;height:64.30px;background:#2b2d35;border-radius:0px;"></div><div style="position:absolute;left:1520.10px;top:341.60px;width:1.00px;height:64.30px;background:#2b2d35;border-radius:0px;"></div><div style="position:absolute;left:1714.50px;top:341.60px;width:1.00px;height:64.30px;background:#2b2d35;border-radius:0px;"></div><div style="position:absolute;left:1909.00px;top:341.60px;width:1.00px;height:64.30px;background:#2b2d35;border-radius:0px;"></div><span id="t63" class="t" style="left:490.66px;top:342.32px;font-size:14.97px;line-height:14.97px;color:#9c9ea4;-webkit-text-stroke:0.22px currentColor;letter-spacing:0.000px;transform:scaleX(0.9360);transform-origin:0 0;">Image</span><span id="t64" class="t" style="left:1010.40px;top:342.32px;font-size:14.97px;line-height:14.97px;color:#9c9ea4;-webkit-text-stroke:0.22px currentColor;letter-spacing:0.000px;transform:scaleX(0.8970);transform-origin:0 0;">Source Path</span><span id="t65" class="t" style="left:1555.00px;top:342.32px;font-size:14.97px;line-height:14.97px;color:#9c9ea4;-webkit-text-stroke:0.22px currentColor;letter-spacing:0.000px;transform:scaleX(0.8898);transform-origin:0 0;">Circle X Shift (%)</span><span id="t66" class="t" style="left:1749.40px;top:342.32px;font-size:14.97px;line-height:14.97px;color:#9c9ea4;-webkit-text-stroke:0.22px currentColor;letter-spacing:0.000px;transform:scaleX(0.8898);transform-origin:0 0;">Circle Y Shift (%)</span><span id="t67" class="t" style="left:1943.00px;top:342.32px;font-size:14.97px;line-height:14.97px;color:#9c9ea4;-webkit-text-stroke:0.22px currentColor;letter-spacing:0.000px;transform:scaleX(0.8870);transform-origin:0 0;">Circle Size (%)</span><svg style="position:absolute;left:1530px;top:342px;" width="18" height="16" viewBox="0 0 18 16"><line x1="1" y1="3.5" x2="10" y2="3.5" stroke="#9c9ea4" stroke-width="1.2"/><line x1="1" y1="7" x2="10" y2="7" stroke="#9c9ea4" stroke-width="1.2"/><line x1="1" y1="10.5" x2="6" y2="10.5" stroke="#9c9ea4" stroke-width="1.2"/><line x1="9" y1="13.5" x2="14.5" y2="8" stroke="#9c9ea4" stroke-width="1.5"/></svg><svg style="position:absolute;left:1724.5px;top:342px;" width="18" height="16" viewBox="0 0 18 16"><line x1="1" y1="3.5" x2="10" y2="3.5" stroke="#9c9ea4" stroke-width="1.2"/><line x1="1" y1="7" x2="10" y2="7" stroke="#9c9ea4" stroke-width="1.2"/><line x1="1" y1="10.5" x2="6" y2="10.5" stroke="#9c9ea4" stroke-width="1.2"/><line x1="9" y1="13.5" x2="14.5" y2="8" stroke="#9c9ea4" stroke-width="1.5"/></svg><svg style="position:absolute;left:1919px;top:342px;" width="18" height="16" viewBox="0 0 18 16"><line x1="1" y1="3.5" x2="10" y2="3.5" stroke="#9c9ea4" stroke-width="1.2"/><line x1="1" y1="7" x2="10" y2="7" stroke="#9c9ea4" stroke-width="1.2"/><line x1="1" y1="10.5" x2="6" y2="10.5" stroke="#9c9ea4" stroke-width="1.2"/><line x1="9" y1="13.5" x2="14.5" y2="8" stroke="#9c9ea4" stroke-width="1.5"/></svg><span id="t68" class="t" style="left:491.53px;top:380.31px;font-size:13.81px;line-height:13.81px;color:#fafafa;-webkit-text-stroke:0.22px currentColor;letter-spacing:0.000px;transform:scaleX(0.9749);transform-origin:0 0;">105_6_2026-03-02_10-43-46_PS_Tray_1971_RGB2_FishEyeCorrected.png</span><span id="t69" class="t" style="left:1010.02px;top:380.31px;font-size:13.81px;line-height:13.81px;color:#fafafa;-webkit-text-stroke:0.22px currentColor;letter-spacing:0.000px;transform:scaleX(0.9758);transform-origin:0 0;">105_6_2026-03-02_10-43-46_PS_Tray_1971_RGB2_FishEyeCorrected.png</span><span id="t70" class="t" style="right:494.20px;top:380.32px;font-size:13.80px;line-height:13.80px;color:#fafafa;-webkit-text-stroke:0.22px currentColor;letter-spacing:0.000px;">0.0</span><span id="t71" class="t" style="right:300.40px;top:380.32px;font-size:13.80px;line-height:13.80px;color:#fafafa;-webkit-text-stroke:0.22px currentColor;letter-spacing:0.000px;">0.0</span><span id="t72" class="t" style="right:115.40px;top:380.32px;font-size:13.80px;line-height:13.80px;color:#fafafa;-webkit-text-stroke:0.22px currentColor;letter-spacing:0.000px;">100.0</span><span id="t73" class="t" style="left:481.43px;top:436.13px;font-size:15.55px;line-height:15.55px;color:#fafafa;-webkit-text-stroke:0.22px currentColor;letter-spacing:0.000px;transform:scaleX(0.8704);transform-origin:0 0;">Images</span><span id="t74" class="t" style="left:1025.90px;top:436.13px;font-size:15.55px;line-height:15.55px;color:#fafafa;-webkit-text-stroke:0.22px currentColor;letter-spacing:0.000px;transform:scaleX(0.8945);transform-origin:0 0;">Total estimated leaves</span><span id="t75" class="t" style="left:1569.00px;top:436.13px;font-size:15.55px;line-height:15.55px;color:#fafafa;-webkit-text-stroke:0.22px currentColor;letter-spacing:0.000px;transform:scaleX(0.8942);transform-origin:0 0;">Total canopy area (cm^2)</span><span id="t76" class="t" style="left:481.75px;top:464.93px;font-size:36.34px;line-height:36.34px;color:#fafafa;-webkit-text-stroke:0.22px currentColor;letter-spacing:0.000px;transform:scaleX(0.9235);transform-origin:0 0;">1</span><span id="t77" class="t" style="left:1025.42px;top:464.62px;font-size:37.06px;line-height:37.06px;color:#fafafa;-webkit-text-stroke:0.22px currentColor;letter-spacing:0.000px;transform:scaleX(0.9380);transform-origin:0 0;">126</span><span id="t78" class="t" style="left:1567.59px;top:464.62px;font-size:37.06px;line-height:37.06px;color:#fafafa;-webkit-text-stroke:0.22px currentColor;letter-spacing:0.000px;transform:scaleX(0.9550);transform-origin:0 0;">115.25</span><div style="position:absolute;left:481.80px;top:530.5px;width:390.10px;height:41.4px;border-radius:8px;background:#13151c;box-shadow:inset 0 0 0 1px #33363e;"></div><span id="t79" class="t" style="left:564.09px;top:543.48px;font-size:17.15px;line-height:17.15px;color:#fafafa;-webkit-text-stroke:0.22px currentColor;letter-spacing:0.000px;transform:scaleX(0.9087);transform-origin:0 0;">Download Image Summary CSV</span><div style="position:absolute;left:889.20px;top:530.5px;width:389.80px;height:41.4px;border-radius:8px;background:#13151c;box-shadow:inset 0 0 0 1px #33363e;"></div><span id="t80" class="t" style="left:988.89px;top:543.48px;font-size:17.15px;line-height:17.15px;color:#fafafa;-webkit-text-stroke:0.22px currentColor;letter-spacing:0.000px;transform:scaleX(0.9120);transform-origin:0 0;">Download Batch Plant CSV</span><div style="position:absolute;left:1297.40px;top:530.5px;width:389.50px;height:41.4px;border-radius:8px;background:#13151c;box-shadow:inset 0 0 0 1px #33363e;"></div><span id="t81" class="t" style="left:1400.40px;top:543.48px;font-size:17.15px;line-height:17.15px;color:#fafafa;-webkit-text-stroke:0.22px currentColor;letter-spacing:0.000px;transform:scaleX(0.8992);transform-origin:0 0;">Download Batch Leaf CSV</span><div style="position:absolute;left:1704.50px;top:530.5px;width:389.90px;height:41.4px;border-radius:8px;background:#13151c;box-shadow:inset 0 0 0 1px #33363e;"></div><span id="t82" class="t" style="left:1814.89px;top:543.48px;font-size:17.15px;line-height:17.15px;color:#fafafa;-webkit-text-stroke:0.22px currentColor;letter-spacing:0.000px;transform:scaleX(0.9052);transform-origin:0 0;">Prepare Full Results ZIP</span><span id="t83" class="t" style="left:482.00px;top:592.95px;font-size:15.41px;line-height:15.41px;color:#a4a6ab;-webkit-text-stroke:0.22px currentColor;letter-spacing:0.000px;transform:scaleX(0.9004);transform-origin:0 0;">The full results zip contains combined CSVs, per-image CSVs, original images, overlays, and mask outputs. It is prepared on demand to keep the web app lighter.</span><span id="t84" class="t" style="left:482.20px;top:645.79px;font-size:29.65px;line-height:29.65px;color:#fafafa;font-weight:700;letter-spacing:0.000px;transform:scaleX(0.8950);transform-origin:0 0;">Batch Image Summary</span><div style="position:absolute;left:482.30px;top:696.30px;width:1611.70px;height:75.50px;border-radius:8px;background:#0f1117;box-shadow:inset 0 0 0 1px #2b2d35;"></div><div style="position:absolute;left:483.30px;top:697.30px;width:1609.70px;height:37.00px;border-radius:7px 7px 0 0;background:#1a1c24;"></div><div style="position:absolute;left:482.30px;top:733.80px;width:1611.70px;height:1.00px;background:#2b2d35;border-radius:0px;"></div><div style="position:absolute;left:956.60px;top:696.30px;width:1.00px;height:75.50px;background:#2b2d35;border-radius:0px;"></div><div style="position:absolute;left:1048.80px;top:696.30px;width:1.00px;height:75.50px;background:#2b2d35;border-radius:0px;"></div><div style="position:absolute;left:1173.70px;top:696.30px;width:1.00px;height:75.50px;background:#2b2d35;border-radius:0px;"></div><div style="position:absolute;left:1253.70px;top:696.30px;width:1.00px;height:75.50px;background:#2b2d35;border-radius:0px;"></div><div style="position:absolute;left:1357.00px;top:696.30px;width:1.00px;height:75.50px;background:#2b2d35;border-radius:0px;"></div><div style="position:absolute;left:1487.90px;top:696.30px;width:1.00px;height:75.50px;background:#2b2d35;border-radius:0px;"></div><div style="position:absolute;left:1607.80px;top:696.30px;width:1.00px;height:75.50px;background:#2b2d35;border-radius:0px;"></div><div style="position:absolute;left:1726.50px;top:696.30px;width:1.00px;height:75.50px;background:#2b2d35;border-radius:0px;"></div><div style="position:absolute;left:1832.50px;top:696.30px;width:1.00px;height:75.50px;background:#2b2d35;border-radius:0px;"></div><div style="position:absolute;left:1993.30px;top:696.30px;width:1.00px;height:75.50px;background:#2b2d35;border-radius:0px;"></div><span id="t85" class="t" style="left:490.42px;top:707.81px;font-size:15.70px;line-height:15.70px;color:#9c9ea4;-webkit-text-stroke:0.22px currentColor;letter-spacing:0.000px;transform:scaleX(0.8793);transform-origin:0 0;">Image</span><span id="t86" class="t" style="left:965.50px;top:707.81px;font-size:15.70px;line-height:15.70px;color:#9c9ea4;-webkit-text-stroke:0.22px currentColor;letter-spacing:0.000px;transform:scaleX(0.8620);transform-origin:0 0;">Source Path</span><span id="t87" class="t" style="left:1057.70px;top:707.81px;font-size:15.70px;line-height:15.70px;color:#9c9ea4;-webkit-text-stroke:0.22px currentColor;letter-spacing:0.000px;transform:scaleX(0.8737);transform-origin:0 0;">Tray Profile</span><span id="t88" class="t" style="left:1182.50px;top:707.81px;font-size:15.70px;line-height:15.70px;color:#9c9ea4;-webkit-text-stroke:0.22px currentColor;letter-spacing:0.000px;transform:scaleX(0.8490);transform-origin:0 0;">Grid Rows</span><span id="t89" class="t" style="left:1262.60px;top:707.81px;font-size:15.70px;line-height:15.70px;color:#9c9ea4;-webkit-text-stroke:0.22px currentColor;letter-spacing:0.000px;transform:scaleX(0.8818);transform-origin:0 0;">Grid Columns</span><span id="t90" class="t" style="left:1365.70px;top:707.81px;font-size:15.70px;line-height:15.70px;color:#9c9ea4;-webkit-text-stroke:0.22px currentColor;letter-spacing:0.000px;transform:scaleX(0.8761);transform-origin:0 0;">Container Source</span><span id="t91" class="t" style="left:1496.60px;top:707.81px;font-size:15.70px;line-height:15.70px;color:#9c9ea4;-webkit-text-stroke:0.22px currentColor;letter-spacing:0.000px;transform:scaleX(0.8583);transform-origin:0 0;">Circle X Shift (%)</span><span id="t92" class="t" style="left:1616.50px;top:707.81px;font-size:15.70px;line-height:15.70px;color:#9c9ea4;-webkit-text-stroke:0.22px currentColor;letter-spacing:0.000px;transform:scaleX(0.8549);transform-origin:0 0;">Circle Y Shift (%)</span><span id="t93" class="t" style="left:1735.20px;top:707.81px;font-size:15.70px;line-height:15.70px;color:#9c9ea4;-webkit-text-stroke:0.22px currentColor;letter-spacing:0.000px;transform:scaleX(0.8493);transform-origin:0 0;">Circle Size (%)</span><span id="t94" class="t" style="left:1841.60px;top:707.81px;font-size:15.70px;line-height:15.70px;color:#9c9ea4;-webkit-text-stroke:0.22px currentColor;letter-spacing:0.000px;transform:scaleX(0.8485);transform-origin:0 0;">Scale Source</span><div style="position:absolute;left:1994px;top:697px;width:99px;height:36px;overflow:hidden;"><span id="t95" class="t" style="left:7.00px;top:11.06px;font-size:15.40px;line-height:15.40px;color:#9c9ea4;-webkit-text-stroke:0.22px currentColor;letter-spacing:-0.950px;">Estimated Leaves</span></div><span id="t96" class="t" style="left:491.07px;top:746.09px;font-size:14.53px;line-height:14.53px;color:#fafafa;-webkit-text-stroke:0.22px currentColor;letter-spacing:0.000px;transform:scaleX(0.9264);transform-origin:0 0;">105_6_2026-03-02_10-43-46_PS_Tray_1971_RGB2_FishEyeCorrected.png</span><span id="t97" class="t" style="left:1057.70px;top:746.09px;font-size:14.53px;line-height:14.53px;color:#fafafa;-webkit-text-stroke:0.22px currentColor;letter-spacing:0.000px;transform:scaleX(0.9490);transform-origin:0 0;">Arabidopsis (4x5)</span><span id="t98" class="t" style="right:955.20px;top:746.12px;font-size:14.50px;line-height:14.50px;color:#fafafa;-webkit-text-stroke:0.22px currentColor;letter-spacing:0.000px;">4</span><span id="t99" class="t" style="right:852.70px;top:746.12px;font-size:14.50px;line-height:14.50px;color:#fafafa;-webkit-text-stroke:0.22px currentColor;letter-spacing:0.000px;">5</span><span id="t100" class="t" style="left:1364.73px;top:746.09px;font-size:14.53px;line-height:14.53px;color:#fafafa;-webkit-text-stroke:0.22px currentColor;letter-spacing:0.000px;transform:scaleX(0.9696);transform-origin:0 0;">Full image fallback</span><span id="t101" class="t" style="right:601.00px;top:746.12px;font-size:14.50px;line-height:14.50px;color:#fafafa;-webkit-text-stroke:0.22px currentColor;letter-spacing:0.000px;">0</span><span id="t102" class="t" style="right:482.40px;top:746.12px;font-size:14.50px;line-height:14.50px;color:#fafafa;-webkit-text-stroke:0.22px currentColor;letter-spacing:0.000px;">0</span><span id="t103" class="t" style="right:376.00px;top:746.12px;font-size:14.50px;line-height:14.50px;color:#fafafa;-webkit-text-stroke:0.22px currentColor;letter-spacing:0.000px;">100</span><span id="t104" class="t" style="left:1841.44px;top:746.09px;font-size:14.53px;line-height:14.53px;color:#fafafa;-webkit-text-stroke:0.22px currentColor;letter-spacing:0.000px;transform:scaleX(0.9627);transform-origin:0 0;">Detected tray long side</span><span id="t105" class="t" style="right:106.00px;top:746.12px;font-size:14.50px;line-height:14.50px;color:#fafafa;-webkit-text-stroke:0.22px currentColor;letter-spacing:0.000px;">1</span><span id="t106" class="t" style="left:481.36px;top:801.72px;font-size:14.97px;line-height:14.97px;color:#fafafa;-webkit-text-stroke:0.22px currentColor;letter-spacing:0.000px;transform:scaleX(0.9404);transform-origin:0 0;">Image detail view</span><div style="position:absolute;left:481.90px;top:827.20px;width:1612.10px;height:42.50px;background:#262730;border-radius:8px;"></div><span id="t107" class="t" style="left:495.25px;top:839.92px;font-size:16.28px;line-height:16.28px;color:#fafafa;-webkit-text-stroke:0.22px currentColor;letter-spacing:0.000px;transform:scaleX(0.9452);transform-origin:0 0;">105_6_2026-03-02_10-43-46_PS_Tray_1971_RGB2_FishEyeCorrected.png</span><svg style="position:absolute;left:2064.5px;top:842px;" width="16" height="14" viewBox="0 0 16 14"><path d="M2.8 4 L8 9.2 L13.2 4" stroke="#f4f4f4" stroke-width="2" fill="none" stroke-linecap="round" stroke-linejoin="round"/></svg><svg style="position:absolute;left:482px;top:887.2px;border-radius:5px;" width="574.4" height="419.6" viewBox="0 0 574.4 419.6"><defs><linearGradient id="bga" x1="0" y1="0" x2="0" y2="1"><stop offset="0" stop-color="#0b2a4a"/><stop offset="1" stop-color="#071e36"/></linearGradient><filter id="spa" x="0" y="0" width="100%" height="100%" color-interpolation-filters="sRGB"><feTurbulence type="fractalNoise" baseFrequency="0.33" numOctaves="2" seed="9" result="n"/><feColorMatrix in="n" type="matrix" values="0 0 0 0 0.06  0 0 0 0 0.13  0 0 0 0 0.22  -8 0 0 0 3.75"/></filter><clipPath id="pca"><rect x="52.0" y="13.8" width="91.6" height="97.0" rx="16"/><rect x="52.0" y="114.8" width="91.6" height="92.8" rx="16"/><rect x="52.0" y="205.8" width="91.6" height="95.0" rx="16"/><rect x="52.0" y="302.8" width="91.6" height="93.2" rx="16"/><rect x="144.4" y="13.8" width="94.3" height="97.0" rx="16"/><rect x="144.4" y="114.8" width="94.3" height="92.8" rx="16"/><rect x="144.4" y="205.8" width="94.3" height="95.0" rx="16"/><rect x="144.4" y="302.8" width="94.3" height="93.2" rx="16"/><rect x="241.2" y="13.8" width="92.6" height="97.0" rx="16"/><rect x="241.2" y="114.8" width="92.6" height="92.8" rx="16"/><rect x="241.2" y="205.8" width="92.6" height="95.0" rx="16"/><rect x="241.2" y="302.8" width="92.6" height="93.2" rx="16"/><rect x="332.7" y="13.8" width="95.3" height="97.0" rx="16"/><rect x="332.7" y="114.8" width="95.3" height="92.8" rx="16"/><rect x="332.7" y="205.8" width="95.3" height="95.0" rx="16"/><rect x="332.7" y="302.8" width="95.3" height="93.2" rx="16"/><rect x="428.7" y="13.8" width="91.3" height="97.0" rx="16"/><rect x="428.7" y="114.8" width="91.3" height="92.8" rx="16"/><rect x="428.7" y="205.8" width="91.3" height="95.0" rx="16"/><rect x="428.7" y="302.8" width="91.3" height="93.2" rx="16"/></clipPath></defs><rect width="574.4" height="419.6" fill="url(#bga)"/><rect x="0" y="64.8" width="41.4" height="45" fill="#33373c"/><rect x="0" y="102.8" width="41.4" height="3.5" fill="#7a8088"/><rect x="0" y="300.3" width="41.4" height="45" fill="#33373c"/><rect x="0" y="338.3" width="41.4" height="3.5" fill="#7a8088"/><rect x="533" y="64.8" width="41.39999999999998" height="45" fill="#33373c"/><rect x="533" y="102.8" width="41.39999999999998" height="3.5" fill="#7a8088"/><rect x="533" y="300.3" width="41.39999999999998" height="45" fill="#33373c"/><rect x="533" y="338.3" width="41.39999999999998" height="3.5" fill="#7a8088"/><rect x="43.3" y="4.2" width="487.6" height="397" rx="16" fill="#2a64a0"/><rect x="47" y="7.9" width="480.2" height="389.6" rx="13" fill="#2d5d8c"/><rect x="50.5" y="15.8" width="91.6" height="97.0" rx="16" fill="#0e1a26" opacity="0.6"/><rect x="142.9" y="15.8" width="94.3" height="97.0" rx="16" fill="#0e1a26" opacity="0.6"/><rect x="239.7" y="15.8" width="92.6" height="97.0" rx="16" fill="#0e1a26" opacity="0.6"/><rect x="331.2" y="15.8" width="95.3" height="97.0" rx="16" fill="#0e1a26" opacity="0.6"/><rect x="427.2" y="15.8" width="91.3" height="97.0" rx="16" fill="#0e1a26" opacity="0.6"/><rect x="50.5" y="116.8" width="91.6" height="92.8" rx="16" fill="#0e1a26" opacity="0.6"/><rect x="142.9" y="116.8" width="94.3" height="92.8" rx="16" fill="#0e1a26" opacity="0.6"/><rect x="239.7" y="116.8" width="92.6" height="92.8" rx="16" fill="#0e1a26" opacity="0.6"/><rect x="331.2" y="116.8" width="95.3" height="92.8" rx="16" fill="#0e1a26" opacity="0.6"/><rect x="427.2" y="116.8" width="91.3" height="92.8" rx="16" fill="#0e1a26" opacity="0.6"/><rect x="50.5" y="207.8" width="91.6" height="95.0" rx="16" fill="#0e1a26" opacity="0.6"/><rect x="142.9" y="207.8" width="94.3" height="95.0" rx="16" fill="#0e1a26" opacity="0.6"/><rect x="239.7" y="207.8" width="92.6" height="95.0" rx="16" fill="#0e1a26" opacity="0.6"/><rect x="331.2" y="207.8" width="95.3" height="95.0" rx="16" fill="#0e1a26" opacity="0.6"/><rect x="427.2" y="207.8" width="91.3" height="95.0" rx="16" fill="#0e1a26" opacity="0.6"/><rect x="50.5" y="304.8" width="91.6" height="93.2" rx="16" fill="#0e1a26" opacity="0.6"/><rect x="142.9" y="304.8" width="94.3" height="93.2" rx="16" fill="#0e1a26" opacity="0.6"/><rect x="239.7" y="304.8" width="92.6" height="93.2" rx="16" fill="#0e1a26" opacity="0.6"/><rect x="331.2" y="304.8" width="95.3" height="93.2" rx="16" fill="#0e1a26" opacity="0.6"/><rect x="427.2" y="304.8" width="91.3" height="93.2" rx="16" fill="#0e1a26" opacity="0.6"/><g clip-path="url(#pca)"><rect x="50" y="12" width="472" height="386" fill="#3577b5"/><rect x="50" y="12" width="472" height="386" filter="url(#spa)"/></g><line x1="93.5" y1="64.1" x2="89.1" y2="78.5" stroke="#70873f" stroke-width="2"/><ellipse cx="85.3" cy="91.4" rx="13.4" ry="8.1" transform="rotate(106.8 85.3 91.4)" fill="#70873f"/><line x1="93.5" y1="64.1" x2="80.1" y2="69.6" stroke="#70873f" stroke-width="2"/><ellipse cx="68.2" cy="74.5" rx="12.9" ry="7.7" transform="rotate(157.6 68.2 74.5)" fill="#70873f"/><line x1="93.5" y1="64.1" x2="80.3" y2="60.1" stroke="#70873f" stroke-width="2"/><ellipse cx="68.6" cy="56.6" rx="12.2" ry="7.9" transform="rotate(196.8 68.6 56.6)" fill="#70873f"/><line x1="93.5" y1="64.1" x2="83.6" y2="54.4" stroke="#70873f" stroke-width="2"/><ellipse cx="74.8" cy="45.7" rx="12.3" ry="8.0" transform="rotate(224.5 74.8 45.7)" fill="#70873f"/><line x1="93.5" y1="64.1" x2="97.3" y2="50.7" stroke="#70873f" stroke-width="2"/><ellipse cx="100.6" cy="38.7" rx="12.4" ry="7.7" transform="rotate(285.7 100.6 38.7)" fill="#70873f"/><line x1="93.5" y1="64.1" x2="105.6" y2="54.0" stroke="#70873f" stroke-width="2"/><ellipse cx="116.3" cy="45.1" rx="14.0" ry="9.3" transform="rotate(320.1 116.3 45.1)" fill="#70873f"/><line x1="93.5" y1="64.1" x2="109.2" y2="62.4" stroke="#70873f" stroke-width="2"/><ellipse cx="123.1" cy="60.8" rx="14.0" ry="8.4" transform="rotate(353.7 123.1 60.8)" fill="#70873f"/><line x1="93.5" y1="64.1" x2="103.3" y2="74.5" stroke="#70873f" stroke-width="2"/><ellipse cx="112.1" cy="83.7" rx="12.7" ry="7.8" transform="rotate(406.6 112.1 83.7)" fill="#70873f"/><line x1="93.5" y1="64.1" x2="99.4" y2="77.2" stroke="#70873f" stroke-width="2"/><ellipse cx="104.6" cy="88.8" rx="12.8" ry="8.9" transform="rotate(425.9 104.6 88.8)" fill="#70873f"/><circle cx="100.2" cy="78.4" r="5.0" fill="#70873f"/><circle cx="82.7" cy="75.2" r="4.1" fill="#70873f"/><circle cx="104.7" cy="68.5" r="5.1" fill="#70873f"/><circle cx="93.5" cy="64.1" r="6.4" fill="#70873f"/><line x1="190.3" y1="60.6" x2="177.2" y2="68.6" stroke="#70873f" stroke-width="2"/><ellipse cx="165.6" cy="75.6" rx="13.6" ry="8.9" transform="rotate(148.7 165.6 75.6)" fill="#70873f"/><line x1="190.3" y1="60.6" x2="175.4" y2="55.3" stroke="#70873f" stroke-width="2"/><ellipse cx="162.2" cy="50.5" rx="14.0" ry="9.6" transform="rotate(199.8 162.2 50.5)" fill="#70873f"/><line x1="190.3" y1="60.6" x2="185.0" y2="46.3" stroke="#70873f" stroke-width="2"/><ellipse cx="180.2" cy="33.5" rx="13.6" ry="9.0" transform="rotate(249.6 180.2 33.5)" fill="#70873f"/><line x1="190.3" y1="60.6" x2="202.1" y2="50.3" stroke="#70873f" stroke-width="2"/><ellipse cx="212.5" cy="41.1" rx="13.9" ry="8.8" transform="rotate(318.7 212.5 41.1)" fill="#70873f"/><line x1="190.3" y1="60.6" x2="204.2" y2="63.8" stroke="#70873f" stroke-width="2"/><ellipse cx="216.6" cy="66.7" rx="12.7" ry="8.2" transform="rotate(373.1 216.6 66.7)" fill="#70873f"/><line x1="190.3" y1="60.6" x2="197.9" y2="72.8" stroke="#70873f" stroke-width="2"/><ellipse cx="204.6" cy="83.7" rx="12.8" ry="8.4" transform="rotate(418.3 204.6 83.7)" fill="#70873f"/><line x1="190.3" y1="60.6" x2="190.4" y2="76.1" stroke="#70873f" stroke-width="2"/><ellipse cx="190.5" cy="89.9" rx="13.8" ry="9.5" transform="rotate(449.6 190.5 89.9)" fill="#70873f"/><circle cx="173.1" cy="52.1" r="4.6" fill="#70873f"/><circle cx="184.8" cy="45.2" r="5.1" fill="#70873f"/><circle cx="172.1" cy="65.7" r="5.6" fill="#70873f"/><circle cx="190.3" cy="60.6" r="6.6" fill="#70873f"/><line x1="292.3" y1="57.1" x2="279.2" y2="58.2" stroke="#70873f" stroke-width="2"/><ellipse cx="267.6" cy="59.1" rx="11.7" ry="7.9" transform="rotate(175.3 267.6 59.1)" fill="#70873f"/><line x1="292.3" y1="57.1" x2="281.9" y2="46.2" stroke="#70873f" stroke-width="2"/><ellipse cx="272.7" cy="36.6" rx="13.4" ry="9.3" transform="rotate(226.2 272.7 36.6)" fill="#70873f"/><line x1="292.3" y1="57.1" x2="291.7" y2="43.3" stroke="#70873f" stroke-width="2"/><ellipse cx="291.2" cy="31.1" rx="12.3" ry="8.3" transform="rotate(267.5 291.2 31.1)" fill="#70873f"/><line x1="292.3" y1="57.1" x2="301.6" y2="46.7" stroke="#70873f" stroke-width="2"/><ellipse cx="309.8" cy="37.4" rx="12.4" ry="7.6" transform="rotate(311.6 309.8 37.4)" fill="#70873f"/><line x1="292.3" y1="57.1" x2="305.4" y2="58.4" stroke="#70873f" stroke-width="2"/><ellipse cx="317.0" cy="59.5" rx="11.7" ry="8.0" transform="rotate(365.7 317.0 59.5)" fill="#70873f"/><line x1="292.3" y1="57.1" x2="299.6" y2="68.5" stroke="#70873f" stroke-width="2"/><ellipse cx="306.0" cy="78.6" rx="12.0" ry="7.7" transform="rotate(417.4 306.0 78.6)" fill="#70873f"/><line x1="292.3" y1="57.1" x2="283.9" y2="67.2" stroke="#70873f" stroke-width="2"/><ellipse cx="276.4" cy="76.2" rx="11.7" ry="7.6" transform="rotate(489.6 276.4 76.2)" fill="#70873f"/><circle cx="275.3" cy="51.6" r="5.0" fill="#70873f"/><circle cx="300.3" cy="47.9" r="4.4" fill="#70873f"/><circle cx="281.0" cy="71.0" r="5.3" fill="#70873f"/><circle cx="292.3" cy="57.1" r="6.1" fill="#70873f"/><line x1="385.6" y1="60.6" x2="395.1" y2="70.2" stroke="#70873f" stroke-width="2"/><ellipse cx="403.5" cy="78.7" rx="12.0" ry="7.5" transform="rotate(45.3 403.5 78.7)" fill="#70873f"/><line x1="385.6" y1="60.6" x2="381.8" y2="74.3" stroke="#70873f" stroke-width="2"/><ellipse cx="378.5" cy="86.5" rx="12.6" ry="7.9" transform="rotate(105.3 378.5 86.5)" fill="#70873f"/><line x1="385.6" y1="60.6" x2="374.5" y2="68.9" stroke="#70873f" stroke-width="2"/><ellipse cx="364.6" cy="76.2" rx="12.3" ry="7.9" transform="rotate(143.3 364.6 76.2)" fill="#70873f"/><line x1="385.6" y1="60.6" x2="372.7" y2="53.0" stroke="#70873f" stroke-width="2"/><ellipse cx="361.3" cy="46.3" rx="13.3" ry="9.0" transform="rotate(210.5 361.3 46.3)" fill="#70873f"/><line x1="385.6" y1="60.6" x2="383.2" y2="46.5" stroke="#70873f" stroke-width="2"/><ellipse cx="381.1" cy="34.0" rx="12.7" ry="8.6" transform="rotate(260.5 381.1 34.0)" fill="#70873f"/><line x1="385.6" y1="60.6" x2="392.8" y2="47.6" stroke="#70873f" stroke-width="2"/><ellipse cx="399.2" cy="36.1" rx="13.2" ry="9.1" transform="rotate(299.0 399.2 36.1)" fill="#70873f"/><line x1="385.6" y1="60.6" x2="399.8" y2="64.0" stroke="#70873f" stroke-width="2"/><ellipse cx="412.5" cy="67.0" rx="13.0" ry="8.4" transform="rotate(373.4 412.5 67.0)" fill="#70873f"/><circle cx="377.2" cy="66.8" r="4.8" fill="#70873f"/><circle cx="395.0" cy="64.5" r="4.1" fill="#70873f"/><circle cx="392.3" cy="71.4" r="3.9" fill="#70873f"/><circle cx="385.6" cy="60.6" r="6.1" fill="#70873f"/><line x1="473.8" y1="55.4" x2="488.5" y2="52.9" stroke="#70873f" stroke-width="2"/><ellipse cx="501.6" cy="50.7" rx="13.3" ry="8.5" transform="rotate(-9.7 501.6 50.7)" fill="#70873f"/><line x1="473.8" y1="55.4" x2="485.3" y2="67.6" stroke="#70873f" stroke-width="2"/><ellipse cx="495.4" cy="78.4" rx="14.9" ry="10.0" transform="rotate(46.8 495.4 78.4)" fill="#70873f"/><line x1="473.8" y1="55.4" x2="468.5" y2="69.7" stroke="#70873f" stroke-width="2"/><ellipse cx="463.8" cy="82.5" rx="13.6" ry="8.7" transform="rotate(110.2 463.8 82.5)" fill="#70873f"/><line x1="473.8" y1="55.4" x2="458.8" y2="56.4" stroke="#70873f" stroke-width="2"/><ellipse cx="445.5" cy="57.2" rx="13.3" ry="9.3" transform="rotate(176.3 445.5 57.2)" fill="#70873f"/><line x1="473.8" y1="55.4" x2="469.4" y2="40.2" stroke="#70873f" stroke-width="2"/><ellipse cx="465.5" cy="26.7" rx="14.0" ry="9.2" transform="rotate(253.9 465.5 26.7)" fill="#70873f"/><line x1="473.8" y1="55.4" x2="478.5" y2="41.2" stroke="#70873f" stroke-width="2"/><ellipse cx="482.8" cy="28.6" rx="13.3" ry="8.5" transform="rotate(288.5 482.8 28.6)" fill="#70873f"/><circle cx="472.0" cy="75.0" r="4.6" fill="#70873f"/><circle cx="494.6" cy="58.4" r="5.2" fill="#70873f"/><circle cx="483.8" cy="68.6" r="4.3" fill="#70873f"/><circle cx="473.8" cy="55.4" r="6.9" fill="#70873f"/><line x1="95.2" y1="166.1" x2="81.7" y2="160.2" stroke="#70873f" stroke-width="2"/><ellipse cx="69.6" cy="155.0" rx="13.1" ry="8.9" transform="rotate(203.5 69.6 155.0)" fill="#70873f"/><line x1="95.2" y1="166.1" x2="89.1" y2="153.8" stroke="#70873f" stroke-width="2"/><ellipse cx="83.6" cy="142.9" rx="12.2" ry="7.5" transform="rotate(243.4 83.6 142.9)" fill="#70873f"/><line x1="95.2" y1="166.1" x2="105.6" y2="156.6" stroke="#70873f" stroke-width="2"/><ellipse cx="114.9" cy="148.2" rx="12.5" ry="8.7" transform="rotate(317.7 114.9 148.2)" fill="#70873f"/><line x1="95.2" y1="166.1" x2="108.6" y2="167.4" stroke="#70873f" stroke-width="2"/><ellipse cx="120.5" cy="168.5" rx="12.0" ry="8.3" transform="rotate(365.4 120.5 168.5)" fill="#70873f"/><line x1="95.2" y1="166.1" x2="96.8" y2="180.8" stroke="#70873f" stroke-width="2"/><ellipse cx="98.3" cy="193.8" rx="13.1" ry="9.1" transform="rotate(443.7 98.3 193.8)" fill="#70873f"/><line x1="95.2" y1="166.1" x2="84.2" y2="175.6" stroke="#70873f" stroke-width="2"/><ellipse cx="74.5" cy="184.1" rx="12.9" ry="8.0" transform="rotate(499.0 74.5 184.1)" fill="#70873f"/><circle cx="82.4" cy="164.7" r="3.8" fill="#70873f"/><circle cx="107.2" cy="168.2" r="4.2" fill="#70873f"/><circle cx="88.6" cy="148.7" r="4.5" fill="#70873f"/><circle cx="95.2" cy="166.1" r="6.1" fill="#70873f"/><line x1="188.6" y1="159.1" x2="204.5" y2="156.6" stroke="#70873f" stroke-width="2"/><ellipse cx="218.7" cy="154.3" rx="14.3" ry="9.2" transform="rotate(351.0 218.7 154.3)" fill="#70873f"/><line x1="188.6" y1="159.1" x2="199.5" y2="168.7" stroke="#70873f" stroke-width="2"/><ellipse cx="209.1" cy="177.3" rx="12.9" ry="8.0" transform="rotate(401.5 209.1 177.3)" fill="#70873f"/><line x1="188.6" y1="159.1" x2="182.6" y2="173.3" stroke="#70873f" stroke-width="2"/><ellipse cx="177.2" cy="185.9" rx="13.7" ry="9.7" transform="rotate(473.1 177.2 185.9)" fill="#70873f"/><line x1="188.6" y1="159.1" x2="174.7" y2="153.2" stroke="#70873f" stroke-width="2"/><ellipse cx="162.3" cy="148.0" rx="13.4" ry="9.1" transform="rotate(562.9 162.3 148.0)" fill="#70873f"/><line x1="188.6" y1="159.1" x2="189.5" y2="144.9" stroke="#70873f" stroke-width="2"/><ellipse cx="190.3" cy="132.3" rx="12.6" ry="8.5" transform="rotate(633.7 190.3 132.3)" fill="#70873f"/><circle cx="204.0" cy="149.3" r="5.3" fill="#70873f"/><circle cx="176.6" cy="160.8" r="5.4" fill="#70873f"/><circle cx="179.5" cy="175.1" r="5.7" fill="#70873f"/><circle cx="188.6" cy="159.1" r="6.6" fill="#70873f"/><line x1="292.3" y1="155.7" x2="284.2" y2="162.6" stroke="#70873f" stroke-width="2"/><ellipse cx="277.0" cy="168.7" rx="9.4" ry="6.5" transform="rotate(139.7 277.0 168.7)" fill="#70873f"/><line x1="292.3" y1="155.7" x2="282.9" y2="154.9" stroke="#70873f" stroke-width="2"/><ellipse cx="274.6" cy="154.2" rx="8.4" ry="5.1" transform="rotate(184.7 274.6 154.2)" fill="#70873f"/><line x1="292.3" y1="155.7" x2="289.9" y2="145.6" stroke="#70873f" stroke-width="2"/><ellipse cx="287.8" cy="136.6" rx="9.3" ry="5.7" transform="rotate(256.7 287.8 136.6)" fill="#70873f"/><line x1="292.3" y1="155.7" x2="298.6" y2="147.1" stroke="#70873f" stroke-width="2"/><ellipse cx="304.1" cy="139.4" rx="9.5" ry="6.4" transform="rotate(305.9 304.1 139.4)" fill="#70873f"/><line x1="292.3" y1="155.7" x2="301.9" y2="152.9" stroke="#70873f" stroke-width="2"/><ellipse cx="310.5" cy="150.5" rx="8.9" ry="5.4" transform="rotate(344.0 310.5 150.5)" fill="#70873f"/><line x1="292.3" y1="155.7" x2="301.9" y2="160.4" stroke="#70873f" stroke-width="2"/><ellipse cx="310.4" cy="164.5" rx="9.5" ry="6.4" transform="rotate(386.0 310.4 164.5)" fill="#70873f"/><line x1="292.3" y1="155.7" x2="292.0" y2="166.3" stroke="#70873f" stroke-width="2"/><ellipse cx="291.7" cy="175.7" rx="9.4" ry="6.1" transform="rotate(451.8 291.7 175.7)" fill="#70873f"/><circle cx="300.8" cy="146.8" r="2.9" fill="#70873f"/><circle cx="292.2" cy="164.4" r="3.0" fill="#70873f"/><circle cx="285.0" cy="151.3" r="3.2" fill="#70873f"/><circle cx="292.3" cy="155.7" r="4.3" fill="#70873f"/><line x1="382.2" y1="155.7" x2="389.3" y2="167.4" stroke="#70873f" stroke-width="2"/><ellipse cx="395.7" cy="177.8" rx="12.2" ry="7.9" transform="rotate(58.7 395.7 177.8)" fill="#70873f"/><line x1="382.2" y1="155.7" x2="381.0" y2="170.5" stroke="#70873f" stroke-width="2"/><ellipse cx="380.0" cy="183.7" rx="13.2" ry="8.5" transform="rotate(94.5 380.0 183.7)" fill="#70873f"/><line x1="382.2" y1="155.7" x2="370.2" y2="162.9" stroke="#70873f" stroke-width="2"/><ellipse cx="359.5" cy="169.4" rx="12.5" ry="8.2" transform="rotate(148.9 359.5 169.4)" fill="#70873f"/><line x1="382.2" y1="155.7" x2="369.2" y2="155.1" stroke="#70873f" stroke-width="2"/><ellipse cx="357.6" cy="154.5" rx="11.6" ry="7.5" transform="rotate(182.8 357.6 154.5)" fill="#70873f"/><line x1="382.2" y1="155.7" x2="372.0" y2="147.6" stroke="#70873f" stroke-width="2"/><ellipse cx="362.9" cy="140.5" rx="11.6" ry="8.0" transform="rotate(218.3 362.9 140.5)" fill="#70873f"/><line x1="382.2" y1="155.7" x2="380.5" y2="141.8" stroke="#70873f" stroke-width="2"/><ellipse cx="379.0" cy="129.5" rx="12.4" ry="8.5" transform="rotate(263.0 379.0 129.5)" fill="#70873f"/><line x1="382.2" y1="155.7" x2="392.5" y2="146.7" stroke="#70873f" stroke-width="2"/><ellipse cx="401.6" cy="138.7" rx="12.1" ry="8.0" transform="rotate(318.8 401.6 138.7)" fill="#70873f"/><line x1="382.2" y1="155.7" x2="396.8" y2="156.7" stroke="#70873f" stroke-width="2"/><ellipse cx="409.7" cy="157.5" rx="13.0" ry="7.9" transform="rotate(363.7 409.7 157.5)" fill="#70873f"/><circle cx="371.2" cy="151.3" r="4.2" fill="#70873f"/><circle cx="384.2" cy="141.5" r="4.7" fill="#70873f"/><circle cx="383.3" cy="137.6" r="4.5" fill="#70873f"/><circle cx="382.2" cy="155.7" r="6.1" fill="#70873f"/><line x1="479.0" y1="152.2" x2="467.8" y2="142.6" stroke="#70873f" stroke-width="2"/><ellipse cx="457.8" cy="134.0" rx="13.1" ry="8.9" transform="rotate(220.7 457.8 134.0)" fill="#70873f"/><line x1="479.0" y1="152.2" x2="481.4" y2="137.6" stroke="#70873f" stroke-width="2"/><ellipse cx="483.5" cy="124.5" rx="13.2" ry="8.6" transform="rotate(279.2 483.5 124.5)" fill="#70873f"/><line x1="479.0" y1="152.2" x2="494.1" y2="150.3" stroke="#70873f" stroke-width="2"/><ellipse cx="507.5" cy="148.6" rx="13.5" ry="9.5" transform="rotate(352.9 507.5 148.6)" fill="#70873f"/><line x1="479.0" y1="152.2" x2="487.6" y2="163.6" stroke="#70873f" stroke-width="2"/><ellipse cx="495.2" cy="173.7" rx="12.7" ry="8.4" transform="rotate(412.9 495.2 173.7)" fill="#70873f"/><line x1="479.0" y1="152.2" x2="473.0" y2="166.5" stroke="#70873f" stroke-width="2"/><ellipse cx="467.6" cy="179.2" rx="13.8" ry="8.4" transform="rotate(472.9 467.6 179.2)" fill="#70873f"/><line x1="479.0" y1="152.2" x2="466.3" y2="159.5" stroke="#70873f" stroke-width="2"/><ellipse cx="455.1" cy="166.1" rx="13.0" ry="7.8" transform="rotate(509.9 455.1 166.1)" fill="#70873f"/><circle cx="479.6" cy="162.9" r="5.1" fill="#70873f"/><circle cx="483.0" cy="133.7" r="4.2" fill="#70873f"/><circle cx="475.5" cy="136.0" r="4.2" fill="#70873f"/><circle cx="479.0" cy="152.2" r="6.4" fill="#70873f"/><line x1="91.7" y1="256.0" x2="105.0" y2="248.6" stroke="#70873f" stroke-width="2"/><ellipse cx="116.8" cy="242.0" rx="13.5" ry="9.6" transform="rotate(330.9 116.8 242.0)" fill="#70873f"/><line x1="91.7" y1="256.0" x2="107.5" y2="256.0" stroke="#70873f" stroke-width="2"/><ellipse cx="121.6" cy="256.0" rx="14.1" ry="10.1" transform="rotate(360.0 121.6 256.0)" fill="#70873f"/><line x1="91.7" y1="256.0" x2="99.9" y2="268.7" stroke="#70873f" stroke-width="2"/><ellipse cx="107.2" cy="279.9" rx="13.4" ry="8.7" transform="rotate(417.1 107.2 279.9)" fill="#70873f"/><line x1="91.7" y1="256.0" x2="90.8" y2="271.5" stroke="#70873f" stroke-width="2"/><ellipse cx="90.0" cy="285.2" rx="13.8" ry="8.5" transform="rotate(453.3 90.0 285.2)" fill="#70873f"/><line x1="91.7" y1="256.0" x2="80.6" y2="268.0" stroke="#70873f" stroke-width="2"/><ellipse cx="70.7" cy="278.7" rx="14.6" ry="8.7" transform="rotate(492.7 70.7 278.7)" fill="#70873f"/><line x1="91.7" y1="256.0" x2="76.0" y2="254.8" stroke="#70873f" stroke-width="2"/><ellipse cx="62.1" cy="253.8" rx="14.0" ry="8.3" transform="rotate(544.3 62.1 253.8)" fill="#70873f"/><line x1="91.7" y1="256.0" x2="79.9" y2="245.0" stroke="#70873f" stroke-width="2"/><ellipse cx="69.4" cy="235.1" rx="14.4" ry="9.4" transform="rotate(583.1 69.4 235.1)" fill="#70873f"/><line x1="91.7" y1="256.0" x2="88.9" y2="239.2" stroke="#70873f" stroke-width="2"/><ellipse cx="86.5" cy="224.3" rx="15.1" ry="10.5" transform="rotate(620.6 86.5 224.3)" fill="#70873f"/><circle cx="103.4" cy="253.9" r="4.8" fill="#70873f"/><circle cx="110.2" cy="260.7" r="4.8" fill="#70873f"/><circle cx="102.2" cy="267.1" r="5.9" fill="#70873f"/><circle cx="91.7" cy="256.0" r="6.9" fill="#70873f"/><line x1="294.0" y1="259.4" x2="298.3" y2="246.1" stroke="#70873f" stroke-width="2"/><ellipse cx="302.2" cy="234.3" rx="12.4" ry="8.8" transform="rotate(288.1 302.2 234.3)" fill="#70873f"/><line x1="294.0" y1="259.4" x2="308.9" y2="256.3" stroke="#70873f" stroke-width="2"/><ellipse cx="322.1" cy="253.5" rx="13.5" ry="8.2" transform="rotate(348.2 322.1 253.5)" fill="#70873f"/><line x1="294.0" y1="259.4" x2="307.7" y2="265.9" stroke="#70873f" stroke-width="2"/><ellipse cx="319.9" cy="271.6" rx="13.5" ry="8.7" transform="rotate(385.3 319.9 271.6)" fill="#70873f"/><line x1="294.0" y1="259.4" x2="297.5" y2="274.7" stroke="#70873f" stroke-width="2"/><ellipse cx="300.6" cy="288.3" rx="14.0" ry="9.4" transform="rotate(437.1 300.6 288.3)" fill="#70873f"/><line x1="294.0" y1="259.4" x2="282.1" y2="266.5" stroke="#70873f" stroke-width="2"/><ellipse cx="271.6" cy="272.9" rx="12.3" ry="8.6" transform="rotate(509.0 271.6 272.9)" fill="#70873f"/><line x1="294.0" y1="259.4" x2="278.5" y2="259.4" stroke="#70873f" stroke-width="2"/><ellipse cx="264.6" cy="259.5" rx="13.8" ry="9.0" transform="rotate(539.8 264.6 259.5)" fill="#70873f"/><line x1="294.0" y1="259.4" x2="286.3" y2="246.7" stroke="#70873f" stroke-width="2"/><ellipse cx="279.5" cy="235.3" rx="13.2" ry="9.4" transform="rotate(598.9 279.5 235.3)" fill="#70873f"/><circle cx="292.7" cy="270.6" r="4.8" fill="#70873f"/><circle cx="294.8" cy="270.5" r="4.3" fill="#70873f"/><circle cx="305.4" cy="263.1" r="4.5" fill="#70873f"/><circle cx="294.0" cy="259.4" r="6.4" fill="#70873f"/><line x1="382.2" y1="256.0" x2="376.0" y2="268.1" stroke="#70873f" stroke-width="2"/><ellipse cx="370.5" cy="278.9" rx="12.1" ry="7.9" transform="rotate(117.1 370.5 278.9)" fill="#70873f"/><line x1="382.2" y1="256.0" x2="370.1" y2="262.4" stroke="#70873f" stroke-width="2"/><ellipse cx="359.3" cy="268.1" rx="12.2" ry="7.3" transform="rotate(152.2 359.3 268.1)" fill="#70873f"/><line x1="382.2" y1="256.0" x2="370.5" y2="250.4" stroke="#70873f" stroke-width="2"/><ellipse cx="360.0" cy="245.3" rx="11.6" ry="7.9" transform="rotate(205.7 360.0 245.3)" fill="#70873f"/><line x1="382.2" y1="256.0" x2="381.2" y2="242.7" stroke="#70873f" stroke-width="2"/><ellipse cx="380.2" cy="230.8" rx="11.9" ry="7.8" transform="rotate(265.5 380.2 230.8)" fill="#70873f"/><line x1="382.2" y1="256.0" x2="393.4" y2="248.9" stroke="#70873f" stroke-width="2"/><ellipse cx="403.3" cy="242.7" rx="11.7" ry="8.2" transform="rotate(327.7 403.3 242.7)" fill="#70873f"/><line x1="382.2" y1="256.0" x2="396.2" y2="257.2" stroke="#70873f" stroke-width="2"/><ellipse cx="408.6" cy="258.3" rx="12.5" ry="8.7" transform="rotate(365.0 408.6 258.3)" fill="#70873f"/><line x1="382.2" y1="256.0" x2="390.2" y2="267.6" stroke="#70873f" stroke-width="2"/><ellipse cx="397.3" cy="277.8" rx="12.5" ry="8.5" transform="rotate(415.4 397.3 277.8)" fill="#70873f"/><circle cx="394.9" cy="254.6" r="5.1" fill="#70873f"/><circle cx="378.0" cy="241.0" r="4.4" fill="#70873f"/><circle cx="376.4" cy="264.2" r="4.0" fill="#70873f"/><circle cx="382.2" cy="256.0" r="6.1" fill="#70873f"/><line x1="475.5" y1="245.6" x2="488.1" y2="253.6" stroke="#70873f" stroke-width="2"/><ellipse cx="499.4" cy="260.6" rx="13.3" ry="8.2" transform="rotate(32.2 499.4 260.6)" fill="#70873f"/><line x1="475.5" y1="245.6" x2="483.9" y2="259.5" stroke="#70873f" stroke-width="2"/><ellipse cx="491.4" cy="271.9" rx="14.5" ry="10.2" transform="rotate(58.8 491.4 271.9)" fill="#70873f"/><line x1="475.5" y1="245.6" x2="467.9" y2="258.6" stroke="#70873f" stroke-width="2"/><ellipse cx="461.2" cy="270.1" rx="13.3" ry="8.3" transform="rotate(120.2 461.2 270.1)" fill="#70873f"/><line x1="475.5" y1="245.6" x2="461.6" y2="252.2" stroke="#70873f" stroke-width="2"/><ellipse cx="449.2" cy="258.1" rx="13.7" ry="8.4" transform="rotate(154.7 449.2 258.1)" fill="#70873f"/><line x1="475.5" y1="245.6" x2="461.8" y2="239.5" stroke="#70873f" stroke-width="2"/><ellipse cx="449.7" cy="234.1" rx="13.3" ry="9.5" transform="rotate(203.9 449.7 234.1)" fill="#70873f"/><line x1="475.5" y1="245.6" x2="473.8" y2="230.1" stroke="#70873f" stroke-width="2"/><ellipse cx="472.3" cy="216.3" rx="13.9" ry="8.7" transform="rotate(263.7 472.3 216.3)" fill="#70873f"/><line x1="475.5" y1="245.6" x2="484.9" y2="233.8" stroke="#70873f" stroke-width="2"/><ellipse cx="493.2" cy="223.3" rx="13.4" ry="8.5" transform="rotate(308.5 493.2 223.3)" fill="#70873f"/><line x1="475.5" y1="245.6" x2="488.2" y2="237.2" stroke="#70873f" stroke-width="2"/><ellipse cx="499.5" cy="229.7" rx="13.5" ry="8.8" transform="rotate(326.5 499.5 229.7)" fill="#70873f"/><circle cx="462.9" cy="245.4" r="5.0" fill="#70873f"/><circle cx="488.8" cy="246.0" r="4.4" fill="#70873f"/><circle cx="466.7" cy="252.1" r="4.2" fill="#70873f"/><circle cx="475.5" cy="245.6" r="6.7" fill="#70873f"/><line x1="91.7" y1="349.3" x2="89.6" y2="359.2" stroke="#70873f" stroke-width="2"/><ellipse cx="87.7" cy="367.9" rx="9.0" ry="5.9" transform="rotate(102.0 87.7 367.9)" fill="#70873f"/><line x1="91.7" y1="349.3" x2="81.5" y2="349.9" stroke="#70873f" stroke-width="2"/><ellipse cx="72.5" cy="350.5" rx="9.1" ry="6.2" transform="rotate(176.5 72.5 350.5)" fill="#70873f"/><line x1="91.7" y1="349.3" x2="86.8" y2="340.8" stroke="#70873f" stroke-width="2"/><ellipse cx="82.5" cy="333.2" rx="8.7" ry="5.5" transform="rotate(240.1 82.5 333.2)" fill="#70873f"/><line x1="91.7" y1="349.3" x2="96.9" y2="341.4" stroke="#70873f" stroke-width="2"/><ellipse cx="101.5" cy="334.3" rx="8.4" ry="5.7" transform="rotate(303.1 101.5 334.3)" fill="#70873f"/><line x1="91.7" y1="349.3" x2="100.9" y2="348.3" stroke="#70873f" stroke-width="2"/><ellipse cx="109.2" cy="347.3" rx="8.3" ry="5.8" transform="rotate(353.5 109.2 347.3)" fill="#70873f"/><line x1="91.7" y1="349.3" x2="96.7" y2="358.1" stroke="#70873f" stroke-width="2"/><ellipse cx="101.1" cy="366.0" rx="9.0" ry="6.2" transform="rotate(420.5 101.1 366.0)" fill="#70873f"/><circle cx="94.6" cy="342.2" r="3.3" fill="#70873f"/><circle cx="79.3" cy="349.0" r="3.6" fill="#70873f"/><circle cx="96.6" cy="339.8" r="3.7" fill="#70873f"/><circle cx="91.7" cy="349.3" r="4.3" fill="#70873f"/><line x1="188.6" y1="349.3" x2="184.0" y2="335.9" stroke="#70873f" stroke-width="2"/><ellipse cx="180.0" cy="323.9" rx="12.6" ry="7.5" transform="rotate(251.3 180.0 323.9)" fill="#70873f"/><line x1="188.6" y1="349.3" x2="192.8" y2="335.5" stroke="#70873f" stroke-width="2"/><ellipse cx="196.6" cy="323.2" rx="12.9" ry="7.8" transform="rotate(287.0 196.6 323.2)" fill="#70873f"/><line x1="188.6" y1="349.3" x2="203.5" y2="348.8" stroke="#70873f" stroke-width="2"/><ellipse cx="216.7" cy="348.4" rx="13.2" ry="8.9" transform="rotate(358.1 216.7 348.4)" fill="#70873f"/><line x1="188.6" y1="349.3" x2="199.6" y2="359.8" stroke="#70873f" stroke-width="2"/><ellipse cx="209.3" cy="369.1" rx="13.5" ry="8.8" transform="rotate(403.7 209.3 369.1)" fill="#70873f"/><line x1="188.6" y1="349.3" x2="191.9" y2="364.3" stroke="#70873f" stroke-width="2"/><ellipse cx="194.8" cy="377.7" rx="13.7" ry="9.4" transform="rotate(437.6 194.8 377.7)" fill="#70873f"/><line x1="188.6" y1="349.3" x2="176.7" y2="358.2" stroke="#70873f" stroke-width="2"/><ellipse cx="166.2" cy="366.1" rx="13.2" ry="8.9" transform="rotate(503.1 166.2 366.1)" fill="#70873f"/><line x1="188.6" y1="349.3" x2="173.3" y2="348.7" stroke="#70873f" stroke-width="2"/><ellipse cx="159.8" cy="348.2" rx="13.6" ry="8.5" transform="rotate(542.3 159.8 348.2)" fill="#70873f"/><circle cx="199.9" cy="355.0" r="5.2" fill="#70873f"/><circle cx="193.4" cy="366.0" r="5.6" fill="#70873f"/><circle cx="174.8" cy="349.8" r="4.8" fill="#70873f"/><circle cx="188.6" cy="349.3" r="6.4" fill="#70873f"/><line x1="383.9" y1="352.8" x2="379.9" y2="339.1" stroke="#70873f" stroke-width="2"/><ellipse cx="376.3" cy="327.0" rx="12.7" ry="8.5" transform="rotate(253.6 376.3 327.0)" fill="#70873f"/><line x1="383.9" y1="352.8" x2="387.5" y2="340.0" stroke="#70873f" stroke-width="2"/><ellipse cx="390.7" cy="328.6" rx="11.8" ry="7.4" transform="rotate(285.7 390.7 328.6)" fill="#70873f"/><line x1="383.9" y1="352.8" x2="397.5" y2="351.8" stroke="#70873f" stroke-width="2"/><ellipse cx="409.6" cy="350.9" rx="12.1" ry="8.0" transform="rotate(355.8 409.6 350.9)" fill="#70873f"/><line x1="383.9" y1="352.8" x2="395.6" y2="358.7" stroke="#70873f" stroke-width="2"/><ellipse cx="406.0" cy="364.0" rx="11.7" ry="7.3" transform="rotate(386.8 406.0 364.0)" fill="#70873f"/><line x1="383.9" y1="352.8" x2="382.2" y2="367.1" stroke="#70873f" stroke-width="2"/><ellipse cx="380.7" cy="379.8" rx="12.8" ry="8.7" transform="rotate(456.7 380.7 379.8)" fill="#70873f"/><line x1="383.9" y1="352.8" x2="373.6" y2="362.3" stroke="#70873f" stroke-width="2"/><ellipse cx="364.4" cy="370.8" rx="12.5" ry="8.1" transform="rotate(497.4 364.4 370.8)" fill="#70873f"/><line x1="383.9" y1="352.8" x2="371.0" y2="349.7" stroke="#70873f" stroke-width="2"/><ellipse cx="359.6" cy="346.9" rx="11.8" ry="8.3" transform="rotate(553.8 359.6 346.9)" fill="#70873f"/><circle cx="389.8" cy="370.6" r="5.2" fill="#70873f"/><circle cx="397.7" cy="354.3" r="5.0" fill="#70873f"/><circle cx="397.4" cy="350.1" r="4.2" fill="#70873f"/><circle cx="383.9" cy="352.8" r="6.1" fill="#70873f"/><line x1="477.3" y1="342.4" x2="477.8" y2="355.8" stroke="#70873f" stroke-width="2"/><ellipse cx="478.2" cy="367.7" rx="11.9" ry="8.0" transform="rotate(88.0 478.2 367.7)" fill="#70873f"/><line x1="477.3" y1="342.4" x2="470.9" y2="354.9" stroke="#70873f" stroke-width="2"/><ellipse cx="465.3" cy="366.1" rx="12.5" ry="8.9" transform="rotate(116.9 465.3 366.1)" fill="#70873f"/><line x1="477.3" y1="342.4" x2="462.9" y2="345.4" stroke="#70873f" stroke-width="2"/><ellipse cx="450.2" cy="348.1" rx="13.0" ry="8.6" transform="rotate(168.1 450.2 348.1)" fill="#70873f"/><line x1="477.3" y1="342.4" x2="470.2" y2="329.8" stroke="#70873f" stroke-width="2"/><ellipse cx="463.9" cy="318.6" rx="12.8" ry="8.0" transform="rotate(240.7 463.9 318.6)" fill="#70873f"/><line x1="477.3" y1="342.4" x2="482.6" y2="329.5" stroke="#70873f" stroke-width="2"/><ellipse cx="487.4" cy="318.0" rx="12.4" ry="7.4" transform="rotate(292.4 487.4 318.0)" fill="#70873f"/><line x1="477.3" y1="342.4" x2="487.8" y2="333.2" stroke="#70873f" stroke-width="2"/><ellipse cx="497.2" cy="325.0" rx="12.4" ry="8.1" transform="rotate(318.8 497.2 325.0)" fill="#70873f"/><line x1="477.3" y1="342.4" x2="489.9" y2="346.6" stroke="#70873f" stroke-width="2"/><ellipse cx="501.1" cy="350.4" rx="11.8" ry="7.5" transform="rotate(378.6 501.1 350.4)" fill="#70873f"/><circle cx="470.2" cy="358.4" r="3.8" fill="#70873f"/><circle cx="477.4" cy="324.9" r="4.0" fill="#70873f"/><circle cx="491.9" cy="335.1" r="5.2" fill="#70873f"/><circle cx="477.3" cy="342.4" r="6.1" fill="#70873f"/></svg><svg style="position:absolute;left:1073.6px;top:887.1px;border-radius:5px;" width="575.9" height="420.6" viewBox="0 0 574.4 419.6" preserveAspectRatio="none"><defs><linearGradient id="bgb" x1="0" y1="0" x2="0" y2="1"><stop offset="0" stop-color="#0b2a4a"/><stop offset="1" stop-color="#071e36"/></linearGradient><filter id="spb" x="0" y="0" width="100%" height="100%" color-interpolation-filters="sRGB"><feTurbulence type="fractalNoise" baseFrequency="0.33" numOctaves="2" seed="5" result="n"/><feColorMatrix in="n" type="matrix" values="0 0 0 0 0.08  0 0 0 0 0.18  0 0 0 0 0.28  -7 0 0 0 3.3"/></filter><clipPath id="pcb"><rect x="52.0" y="13.8" width="91.6" height="97.0" rx="16"/><rect x="52.0" y="114.8" width="91.6" height="92.8" rx="16"/><rect x="52.0" y="205.8" width="91.6" height="95.0" rx="16"/><rect x="52.0" y="302.8" width="91.6" height="93.2" rx="16"/><rect x="144.4" y="13.8" width="94.3" height="97.0" rx="16"/><rect x="144.4" y="114.8" width="94.3" height="92.8" rx="16"/><rect x="144.4" y="205.8" width="94.3" height="95.0" rx="16"/><rect x="144.4" y="302.8" width="94.3" height="93.2" rx="16"/><rect x="241.2" y="13.8" width="92.6" height="97.0" rx="16"/><rect x="241.2" y="114.8" width="92.6" height="92.8" rx="16"/><rect x="241.2" y="205.8" width="92.6" height="95.0" rx="16"/><rect x="241.2" y="302.8" width="92.6" height="93.2" rx="16"/><rect x="332.7" y="13.8" width="95.3" height="97.0" rx="16"/><rect x="332.7" y="114.8" width="95.3" height="92.8" rx="16"/><rect x="332.7" y="205.8" width="95.3" height="95.0" rx="16"/><rect x="332.7" y="302.8" width="95.3" height="93.2" rx="16"/><rect x="428.7" y="13.8" width="91.3" height="97.0" rx="16"/><rect x="428.7" y="114.8" width="91.3" height="92.8" rx="16"/><rect x="428.7" y="205.8" width="91.3" height="95.0" rx="16"/><rect x="428.7" y="302.8" width="91.3" height="93.2" rx="16"/></clipPath></defs><rect width="574.4" height="419.6" fill="url(#bgb)"/><rect x="0" y="64.8" width="41.4" height="45" fill="#33373c"/><rect x="0" y="102.8" width="41.4" height="3.5" fill="#7a8088"/><rect x="0" y="300.3" width="41.4" height="45" fill="#33373c"/><rect x="0" y="338.3" width="41.4" height="3.5" fill="#7a8088"/><rect x="533" y="64.8" width="41.39999999999998" height="45" fill="#33373c"/><rect x="533" y="102.8" width="41.39999999999998" height="3.5" fill="#7a8088"/><rect x="533" y="300.3" width="41.39999999999998" height="45" fill="#33373c"/><rect x="533" y="338.3" width="41.39999999999998" height="3.5" fill="#7a8088"/><rect x="43.3" y="4.2" width="487.6" height="397" rx="16" fill="#2a64a0"/><rect x="47" y="7.9" width="480.2" height="389.6" rx="13" fill="#2d5d8c"/><rect x="50.5" y="15.8" width="91.6" height="97.0" rx="16" fill="#0e1a26" opacity="0.6"/><rect x="142.9" y="15.8" width="94.3" height="97.0" rx="16" fill="#0e1a26" opacity="0.6"/><rect x="239.7" y="15.8" width="92.6" height="97.0" rx="16" fill="#0e1a26" opacity="0.6"/><rect x="331.2" y="15.8" width="95.3" height="97.0" rx="16" fill="#0e1a26" opacity="0.6"/><rect x="427.2" y="15.8" width="91.3" height="97.0" rx="16" fill="#0e1a26" opacity="0.6"/><rect x="50.5" y="116.8" width="91.6" height="92.8" rx="16" fill="#0e1a26" opacity="0.6"/><rect x="142.9" y="116.8" width="94.3" height="92.8" rx="16" fill="#0e1a26" opacity="0.6"/><rect x="239.7" y="116.8" width="92.6" height="92.8" rx="16" fill="#0e1a26" opacity="0.6"/><rect x="331.2" y="116.8" width="95.3" height="92.8" rx="16" fill="#0e1a26" opacity="0.6"/><rect x="427.2" y="116.8" width="91.3" height="92.8" rx="16" fill="#0e1a26" opacity="0.6"/><rect x="50.5" y="207.8" width="91.6" height="95.0" rx="16" fill="#0e1a26" opacity="0.6"/><rect x="142.9" y="207.8" width="94.3" height="95.0" rx="16" fill="#0e1a26" opacity="0.6"/><rect x="239.7" y="207.8" width="92.6" height="95.0" rx="16" fill="#0e1a26" opacity="0.6"/><rect x="331.2" y="207.8" width="95.3" height="95.0" rx="16" fill="#0e1a26" opacity="0.6"/><rect x="427.2" y="207.8" width="91.3" height="95.0" rx="16" fill="#0e1a26" opacity="0.6"/><rect x="50.5" y="304.8" width="91.6" height="93.2" rx="16" fill="#0e1a26" opacity="0.6"/><rect x="142.9" y="304.8" width="94.3" height="93.2" rx="16" fill="#0e1a26" opacity="0.6"/><rect x="239.7" y="304.8" width="92.6" height="93.2" rx="16" fill="#0e1a26" opacity="0.6"/><rect x="331.2" y="304.8" width="95.3" height="93.2" rx="16" fill="#0e1a26" opacity="0.6"/><rect x="427.2" y="304.8" width="91.3" height="93.2" rx="16" fill="#0e1a26" opacity="0.6"/><g clip-path="url(#pcb)"><rect x="50" y="12" width="472" height="386" fill="#2e67a0"/><rect x="50" y="12" width="472" height="386" filter="url(#spb)"/></g><line x1="93.5" y1="64.1" x2="89.1" y2="78.5" stroke="#e8563e" stroke-width="2"/><ellipse cx="85.3" cy="91.4" rx="13.4" ry="8.1" transform="rotate(106.8 85.3 91.4)" fill="#8c5a42" stroke="#e8563e" stroke-width="1" fill-opacity="0.85"/><circle cx="85.3" cy="91.4" r="1.3" fill="#f4f4f4"/><line x1="93.5" y1="64.1" x2="80.1" y2="69.6" stroke="#e8563e" stroke-width="2"/><ellipse cx="68.2" cy="74.5" rx="12.9" ry="7.7" transform="rotate(157.6 68.2 74.5)" fill="#8c5a42" stroke="#e8563e" stroke-width="1" fill-opacity="0.85"/><circle cx="68.2" cy="74.5" r="1.3" fill="#f4f4f4"/><line x1="93.5" y1="64.1" x2="80.3" y2="60.1" stroke="#e8563e" stroke-width="2"/><ellipse cx="68.6" cy="56.6" rx="12.2" ry="7.9" transform="rotate(196.8 68.6 56.6)" fill="#8c5a42" stroke="#e8563e" stroke-width="1" fill-opacity="0.85"/><circle cx="68.6" cy="56.6" r="1.3" fill="#f4f4f4"/><line x1="93.5" y1="64.1" x2="83.6" y2="54.4" stroke="#e8563e" stroke-width="2"/><ellipse cx="74.8" cy="45.7" rx="12.3" ry="8.0" transform="rotate(224.5 74.8 45.7)" fill="#8c5a42" stroke="#e8563e" stroke-width="1" fill-opacity="0.85"/><circle cx="74.8" cy="45.7" r="1.3" fill="#f4f4f4"/><line x1="93.5" y1="64.1" x2="97.3" y2="50.7" stroke="#e8563e" stroke-width="2"/><ellipse cx="100.6" cy="38.7" rx="12.4" ry="7.7" transform="rotate(285.7 100.6 38.7)" fill="#8c5a42" stroke="#e8563e" stroke-width="1" fill-opacity="0.85"/><circle cx="100.6" cy="38.7" r="1.3" fill="#f4f4f4"/><line x1="93.5" y1="64.1" x2="105.6" y2="54.0" stroke="#e8563e" stroke-width="2"/><ellipse cx="116.3" cy="45.1" rx="14.0" ry="9.3" transform="rotate(320.1 116.3 45.1)" fill="#8c5a42" stroke="#e8563e" stroke-width="1" fill-opacity="0.85"/><circle cx="116.3" cy="45.1" r="1.3" fill="#f4f4f4"/><line x1="93.5" y1="64.1" x2="109.2" y2="62.4" stroke="#e8563e" stroke-width="2"/><ellipse cx="123.1" cy="60.8" rx="14.0" ry="8.4" transform="rotate(353.7 123.1 60.8)" fill="#8c5a42" stroke="#e8563e" stroke-width="1" fill-opacity="0.85"/><circle cx="123.1" cy="60.8" r="1.3" fill="#f4f4f4"/><line x1="93.5" y1="64.1" x2="103.3" y2="74.5" stroke="#e8563e" stroke-width="2"/><ellipse cx="112.1" cy="83.7" rx="12.7" ry="7.8" transform="rotate(406.6 112.1 83.7)" fill="#8c5a42" stroke="#e8563e" stroke-width="1" fill-opacity="0.85"/><circle cx="112.1" cy="83.7" r="1.3" fill="#f4f4f4"/><line x1="93.5" y1="64.1" x2="99.4" y2="77.2" stroke="#e8563e" stroke-width="2"/><ellipse cx="104.6" cy="88.8" rx="12.8" ry="8.9" transform="rotate(425.9 104.6 88.8)" fill="#8c5a42" stroke="#e8563e" stroke-width="1" fill-opacity="0.85"/><circle cx="104.6" cy="88.8" r="1.3" fill="#f4f4f4"/><circle cx="100.2" cy="78.4" r="5.0" fill="#8c5a42" stroke="#e8563e" stroke-width="1" fill-opacity="0.85"/><circle cx="82.7" cy="75.2" r="4.1" fill="#8c5a42" stroke="#e8563e" stroke-width="1" fill-opacity="0.85"/><circle cx="104.7" cy="68.5" r="5.1" fill="#8c5a42" stroke="#e8563e" stroke-width="1" fill-opacity="0.85"/><circle cx="93.5" cy="64.1" r="6.4" fill="#8c5a42"/><rect x="67.9" y="17.8" width="14" height="4.5" fill="#1a1a1a"/><rect x="68.9" y="19.0" width="11" height="2" fill="#e8563e"/><line x1="190.3" y1="60.6" x2="177.2" y2="68.6" stroke="#e88a3e" stroke-width="2"/><ellipse cx="165.6" cy="75.6" rx="13.6" ry="8.9" transform="rotate(148.7 165.6 75.6)" fill="#9a7646" stroke="#e88a3e" stroke-width="1" fill-opacity="0.85"/><circle cx="165.6" cy="75.6" r="1.3" fill="#f4f4f4"/><line x1="190.3" y1="60.6" x2="175.4" y2="55.3" stroke="#e88a3e" stroke-width="2"/><ellipse cx="162.2" cy="50.5" rx="14.0" ry="9.6" transform="rotate(199.8 162.2 50.5)" fill="#9a7646" stroke="#e88a3e" stroke-width="1" fill-opacity="0.85"/><circle cx="162.2" cy="50.5" r="1.3" fill="#f4f4f4"/><line x1="190.3" y1="60.6" x2="185.0" y2="46.3" stroke="#e88a3e" stroke-width="2"/><ellipse cx="180.2" cy="33.5" rx="13.6" ry="9.0" transform="rotate(249.6 180.2 33.5)" fill="#9a7646" stroke="#e88a3e" stroke-width="1" fill-opacity="0.85"/><circle cx="180.2" cy="33.5" r="1.3" fill="#f4f4f4"/><line x1="190.3" y1="60.6" x2="202.1" y2="50.3" stroke="#e88a3e" stroke-width="2"/><ellipse cx="212.5" cy="41.1" rx="13.9" ry="8.8" transform="rotate(318.7 212.5 41.1)" fill="#9a7646" stroke="#e88a3e" stroke-width="1" fill-opacity="0.85"/><circle cx="212.5" cy="41.1" r="1.3" fill="#f4f4f4"/><line x1="190.3" y1="60.6" x2="204.2" y2="63.8" stroke="#e88a3e" stroke-width="2"/><ellipse cx="216.6" cy="66.7" rx="12.7" ry="8.2" transform="rotate(373.1 216.6 66.7)" fill="#9a7646" stroke="#e88a3e" stroke-width="1" fill-opacity="0.85"/><circle cx="216.6" cy="66.7" r="1.3" fill="#f4f4f4"/><line x1="190.3" y1="60.6" x2="197.9" y2="72.8" stroke="#e88a3e" stroke-width="2"/><ellipse cx="204.6" cy="83.7" rx="12.8" ry="8.4" transform="rotate(418.3 204.6 83.7)" fill="#9a7646" stroke="#e88a3e" stroke-width="1" fill-opacity="0.85"/><circle cx="204.6" cy="83.7" r="1.3" fill="#f4f4f4"/><line x1="190.3" y1="60.6" x2="190.4" y2="76.1" stroke="#e88a3e" stroke-width="2"/><ellipse cx="190.5" cy="89.9" rx="13.8" ry="9.5" transform="rotate(449.6 190.5 89.9)" fill="#9a7646" stroke="#e88a3e" stroke-width="1" fill-opacity="0.85"/><circle cx="190.5" cy="89.9" r="1.3" fill="#f4f4f4"/><circle cx="173.1" cy="52.1" r="4.6" fill="#9a7646" stroke="#e88a3e" stroke-width="1" fill-opacity="0.85"/><circle cx="184.8" cy="45.2" r="5.1" fill="#9a7646" stroke="#e88a3e" stroke-width="1" fill-opacity="0.85"/><circle cx="172.1" cy="65.7" r="5.6" fill="#9a7646" stroke="#e88a3e" stroke-width="1" fill-opacity="0.85"/><circle cx="190.3" cy="60.6" r="6.6" fill="#9a7646"/><rect x="164.3" y="17.8" width="14" height="4.5" fill="#1a1a1a"/><rect x="165.3" y="19.0" width="11" height="2" fill="#e88a3e"/><line x1="292.3" y1="57.1" x2="279.2" y2="58.2" stroke="#e8b43e" stroke-width="2"/><ellipse cx="267.6" cy="59.1" rx="11.7" ry="7.9" transform="rotate(175.3 267.6 59.1)" fill="#a08a40" stroke="#e8b43e" stroke-width="1" fill-opacity="0.85"/><circle cx="267.6" cy="59.1" r="1.3" fill="#f4f4f4"/><line x1="292.3" y1="57.1" x2="281.9" y2="46.2" stroke="#e8b43e" stroke-width="2"/><ellipse cx="272.7" cy="36.6" rx="13.4" ry="9.3" transform="rotate(226.2 272.7 36.6)" fill="#a08a40" stroke="#e8b43e" stroke-width="1" fill-opacity="0.85"/><circle cx="272.7" cy="36.6" r="1.3" fill="#f4f4f4"/><line x1="292.3" y1="57.1" x2="291.7" y2="43.3" stroke="#e8b43e" stroke-width="2"/><ellipse cx="291.2" cy="31.1" rx="12.3" ry="8.3" transform="rotate(267.5 291.2 31.1)" fill="#a08a40" stroke="#e8b43e" stroke-width="1" fill-opacity="0.85"/><circle cx="291.2" cy="31.1" r="1.3" fill="#f4f4f4"/><line x1="292.3" y1="57.1" x2="301.6" y2="46.7" stroke="#e8b43e" stroke-width="2"/><ellipse cx="309.8" cy="37.4" rx="12.4" ry="7.6" transform="rotate(311.6 309.8 37.4)" fill="#a08a40" stroke="#e8b43e" stroke-width="1" fill-opacity="0.85"/><circle cx="309.8" cy="37.4" r="1.3" fill="#f4f4f4"/><line x1="292.3" y1="57.1" x2="305.4" y2="58.4" stroke="#e8b43e" stroke-width="2"/><ellipse cx="317.0" cy="59.5" rx="11.7" ry="8.0" transform="rotate(365.7 317.0 59.5)" fill="#a08a40" stroke="#e8b43e" stroke-width="1" fill-opacity="0.85"/><circle cx="317.0" cy="59.5" r="1.3" fill="#f4f4f4"/><line x1="292.3" y1="57.1" x2="299.6" y2="68.5" stroke="#e8b43e" stroke-width="2"/><ellipse cx="306.0" cy="78.6" rx="12.0" ry="7.7" transform="rotate(417.4 306.0 78.6)" fill="#a08a40" stroke="#e8b43e" stroke-width="1" fill-opacity="0.85"/><circle cx="306.0" cy="78.6" r="1.3" fill="#f4f4f4"/><line x1="292.3" y1="57.1" x2="283.9" y2="67.2" stroke="#e8b43e" stroke-width="2"/><ellipse cx="276.4" cy="76.2" rx="11.7" ry="7.6" transform="rotate(489.6 276.4 76.2)" fill="#a08a40" stroke="#e8b43e" stroke-width="1" fill-opacity="0.85"/><circle cx="276.4" cy="76.2" r="1.3" fill="#f4f4f4"/><circle cx="275.3" cy="51.6" r="5.0" fill="#a08a40" stroke="#e8b43e" stroke-width="1" fill-opacity="0.85"/><circle cx="300.3" cy="47.9" r="4.4" fill="#a08a40" stroke="#e8b43e" stroke-width="1" fill-opacity="0.85"/><circle cx="281.0" cy="71.0" r="5.3" fill="#a08a40" stroke="#e8b43e" stroke-width="1" fill-opacity="0.85"/><circle cx="292.3" cy="57.1" r="6.1" fill="#a08a40"/><rect x="262.1" y="17.8" width="14" height="4.5" fill="#1a1a1a"/><rect x="263.1" y="19.0" width="11" height="2" fill="#e8b43e"/><line x1="385.6" y1="60.6" x2="395.1" y2="70.2" stroke="#e0d040" stroke-width="2"/><ellipse cx="403.5" cy="78.7" rx="12.0" ry="7.5" transform="rotate(45.3 403.5 78.7)" fill="#9a9a40" stroke="#e0d040" stroke-width="1" fill-opacity="0.85"/><circle cx="403.5" cy="78.7" r="1.3" fill="#f4f4f4"/><line x1="385.6" y1="60.6" x2="381.8" y2="74.3" stroke="#e0d040" stroke-width="2"/><ellipse cx="378.5" cy="86.5" rx="12.6" ry="7.9" transform="rotate(105.3 378.5 86.5)" fill="#9a9a40" stroke="#e0d040" stroke-width="1" fill-opacity="0.85"/><circle cx="378.5" cy="86.5" r="1.3" fill="#f4f4f4"/><line x1="385.6" y1="60.6" x2="374.5" y2="68.9" stroke="#e0d040" stroke-width="2"/><ellipse cx="364.6" cy="76.2" rx="12.3" ry="7.9" transform="rotate(143.3 364.6 76.2)" fill="#9a9a40" stroke="#e0d040" stroke-width="1" fill-opacity="0.85"/><circle cx="364.6" cy="76.2" r="1.3" fill="#f4f4f4"/><line x1="385.6" y1="60.6" x2="372.7" y2="53.0" stroke="#e0d040" stroke-width="2"/><ellipse cx="361.3" cy="46.3" rx="13.3" ry="9.0" transform="rotate(210.5 361.3 46.3)" fill="#9a9a40" stroke="#e0d040" stroke-width="1" fill-opacity="0.85"/><circle cx="361.3" cy="46.3" r="1.3" fill="#f4f4f4"/><line x1="385.6" y1="60.6" x2="383.2" y2="46.5" stroke="#e0d040" stroke-width="2"/><ellipse cx="381.1" cy="34.0" rx="12.7" ry="8.6" transform="rotate(260.5 381.1 34.0)" fill="#9a9a40" stroke="#e0d040" stroke-width="1" fill-opacity="0.85"/><circle cx="381.1" cy="34.0" r="1.3" fill="#f4f4f4"/><line x1="385.6" y1="60.6" x2="392.8" y2="47.6" stroke="#e0d040" stroke-width="2"/><ellipse cx="399.2" cy="36.1" rx="13.2" ry="9.1" transform="rotate(299.0 399.2 36.1)" fill="#9a9a40" stroke="#e0d040" stroke-width="1" fill-opacity="0.85"/><circle cx="399.2" cy="36.1" r="1.3" fill="#f4f4f4"/><line x1="385.6" y1="60.6" x2="399.8" y2="64.0" stroke="#e0d040" stroke-width="2"/><ellipse cx="412.5" cy="67.0" rx="13.0" ry="8.4" transform="rotate(373.4 412.5 67.0)" fill="#9a9a40" stroke="#e0d040" stroke-width="1" fill-opacity="0.85"/><circle cx="412.5" cy="67.0" r="1.3" fill="#f4f4f4"/><circle cx="377.2" cy="66.8" r="4.8" fill="#9a9a40" stroke="#e0d040" stroke-width="1" fill-opacity="0.85"/><circle cx="395.0" cy="64.5" r="4.1" fill="#9a9a40" stroke="#e0d040" stroke-width="1" fill-opacity="0.85"/><circle cx="392.3" cy="71.4" r="3.9" fill="#9a9a40" stroke="#e0d040" stroke-width="1" fill-opacity="0.85"/><circle cx="385.6" cy="60.6" r="6.1" fill="#9a9a40"/><rect x="382.6" y="17.8" width="14" height="4.5" fill="#1a1a1a"/><rect x="383.6" y="19.0" width="11" height="2" fill="#e0d040"/><line x1="473.8" y1="55.4" x2="488.5" y2="52.9" stroke="#c8e040" stroke-width="2"/><ellipse cx="501.6" cy="50.7" rx="13.3" ry="8.5" transform="rotate(-9.7 501.6 50.7)" fill="#8aa440" stroke="#c8e040" stroke-width="1" fill-opacity="0.85"/><circle cx="501.6" cy="50.7" r="1.3" fill="#f4f4f4"/><line x1="473.8" y1="55.4" x2="485.3" y2="67.6" stroke="#c8e040" stroke-width="2"/><ellipse cx="495.4" cy="78.4" rx="14.9" ry="10.0" transform="rotate(46.8 495.4 78.4)" fill="#8aa440" stroke="#c8e040" stroke-width="1" fill-opacity="0.85"/><circle cx="495.4" cy="78.4" r="1.3" fill="#f4f4f4"/><line x1="473.8" y1="55.4" x2="468.5" y2="69.7" stroke="#c8e040" stroke-width="2"/><ellipse cx="463.8" cy="82.5" rx="13.6" ry="8.7" transform="rotate(110.2 463.8 82.5)" fill="#8aa440" stroke="#c8e040" stroke-width="1" fill-opacity="0.85"/><circle cx="463.8" cy="82.5" r="1.3" fill="#f4f4f4"/><line x1="473.8" y1="55.4" x2="458.8" y2="56.4" stroke="#c8e040" stroke-width="2"/><ellipse cx="445.5" cy="57.2" rx="13.3" ry="9.3" transform="rotate(176.3 445.5 57.2)" fill="#8aa440" stroke="#c8e040" stroke-width="1" fill-opacity="0.85"/><circle cx="445.5" cy="57.2" r="1.3" fill="#f4f4f4"/><line x1="473.8" y1="55.4" x2="469.4" y2="40.2" stroke="#c8e040" stroke-width="2"/><ellipse cx="465.5" cy="26.7" rx="14.0" ry="9.2" transform="rotate(253.9 465.5 26.7)" fill="#8aa440" stroke="#c8e040" stroke-width="1" fill-opacity="0.85"/><circle cx="465.5" cy="26.7" r="1.3" fill="#f4f4f4"/><line x1="473.8" y1="55.4" x2="478.5" y2="41.2" stroke="#c8e040" stroke-width="2"/><ellipse cx="482.8" cy="28.6" rx="13.3" ry="8.5" transform="rotate(288.5 482.8 28.6)" fill="#8aa440" stroke="#c8e040" stroke-width="1" fill-opacity="0.85"/><circle cx="482.8" cy="28.6" r="1.3" fill="#f4f4f4"/><circle cx="472.0" cy="75.0" r="4.6" fill="#8aa440" stroke="#c8e040" stroke-width="1" fill-opacity="0.85"/><circle cx="494.6" cy="58.4" r="5.2" fill="#8aa440" stroke="#c8e040" stroke-width="1" fill-opacity="0.85"/><circle cx="483.8" cy="68.6" r="4.3" fill="#8aa440" stroke="#c8e040" stroke-width="1" fill-opacity="0.85"/><circle cx="473.8" cy="55.4" r="6.9" fill="#8aa440"/><rect x="459.0" y="17.8" width="14" height="4.5" fill="#1a1a1a"/><rect x="460.0" y="19.0" width="11" height="2" fill="#c8e040"/><line x1="95.2" y1="166.1" x2="81.7" y2="160.2" stroke="#c8e046" stroke-width="2"/><ellipse cx="69.6" cy="155.0" rx="13.1" ry="8.9" transform="rotate(203.5 69.6 155.0)" fill="#8ca43e" stroke="#c8e046" stroke-width="1" fill-opacity="0.85"/><circle cx="69.6" cy="155.0" r="1.3" fill="#f4f4f4"/><line x1="95.2" y1="166.1" x2="89.1" y2="153.8" stroke="#c8e046" stroke-width="2"/><ellipse cx="83.6" cy="142.9" rx="12.2" ry="7.5" transform="rotate(243.4 83.6 142.9)" fill="#8ca43e" stroke="#c8e046" stroke-width="1" fill-opacity="0.85"/><circle cx="83.6" cy="142.9" r="1.3" fill="#f4f4f4"/><line x1="95.2" y1="166.1" x2="105.6" y2="156.6" stroke="#c8e046" stroke-width="2"/><ellipse cx="114.9" cy="148.2" rx="12.5" ry="8.7" transform="rotate(317.7 114.9 148.2)" fill="#8ca43e" stroke="#c8e046" stroke-width="1" fill-opacity="0.85"/><circle cx="114.9" cy="148.2" r="1.3" fill="#f4f4f4"/><line x1="95.2" y1="166.1" x2="108.6" y2="167.4" stroke="#c8e046" stroke-width="2"/><ellipse cx="120.5" cy="168.5" rx="12.0" ry="8.3" transform="rotate(365.4 120.5 168.5)" fill="#8ca43e" stroke="#c8e046" stroke-width="1" fill-opacity="0.85"/><circle cx="120.5" cy="168.5" r="1.3" fill="#f4f4f4"/><line x1="95.2" y1="166.1" x2="96.8" y2="180.8" stroke="#c8e046" stroke-width="2"/><ellipse cx="98.3" cy="193.8" rx="13.1" ry="9.1" transform="rotate(443.7 98.3 193.8)" fill="#8ca43e" stroke="#c8e046" stroke-width="1" fill-opacity="0.85"/><circle cx="98.3" cy="193.8" r="1.3" fill="#f4f4f4"/><line x1="95.2" y1="166.1" x2="84.2" y2="175.6" stroke="#c8e046" stroke-width="2"/><ellipse cx="74.5" cy="184.1" rx="12.9" ry="8.0" transform="rotate(499.0 74.5 184.1)" fill="#8ca43e" stroke="#c8e046" stroke-width="1" fill-opacity="0.85"/><circle cx="74.5" cy="184.1" r="1.3" fill="#f4f4f4"/><circle cx="82.4" cy="164.7" r="3.8" fill="#8ca43e" stroke="#c8e046" stroke-width="1" fill-opacity="0.85"/><circle cx="107.2" cy="168.2" r="4.2" fill="#8ca43e" stroke="#c8e046" stroke-width="1" fill-opacity="0.85"/><circle cx="88.6" cy="148.7" r="4.5" fill="#8ca43e" stroke="#c8e046" stroke-width="1" fill-opacity="0.85"/><circle cx="95.2" cy="166.1" r="6.1" fill="#8ca43e"/><rect x="71.3" y="118.8" width="14" height="4.5" fill="#1a1a1a"/><rect x="72.3" y="120.0" width="11" height="2" fill="#c8e046"/><line x1="188.6" y1="159.1" x2="204.5" y2="156.6" stroke="#88e04a" stroke-width="2"/><ellipse cx="218.7" cy="154.3" rx="14.3" ry="9.2" transform="rotate(351.0 218.7 154.3)" fill="#6ea43e" stroke="#88e04a" stroke-width="1" fill-opacity="0.85"/><circle cx="218.7" cy="154.3" r="1.3" fill="#f4f4f4"/><line x1="188.6" y1="159.1" x2="199.5" y2="168.7" stroke="#88e04a" stroke-width="2"/><ellipse cx="209.1" cy="177.3" rx="12.9" ry="8.0" transform="rotate(401.5 209.1 177.3)" fill="#6ea43e" stroke="#88e04a" stroke-width="1" fill-opacity="0.85"/><circle cx="209.1" cy="177.3" r="1.3" fill="#f4f4f4"/><line x1="188.6" y1="159.1" x2="182.6" y2="173.3" stroke="#88e04a" stroke-width="2"/><ellipse cx="177.2" cy="185.9" rx="13.7" ry="9.7" transform="rotate(473.1 177.2 185.9)" fill="#6ea43e" stroke="#88e04a" stroke-width="1" fill-opacity="0.85"/><circle cx="177.2" cy="185.9" r="1.3" fill="#f4f4f4"/><line x1="188.6" y1="159.1" x2="174.7" y2="153.2" stroke="#88e04a" stroke-width="2"/><ellipse cx="162.3" cy="148.0" rx="13.4" ry="9.1" transform="rotate(562.9 162.3 148.0)" fill="#6ea43e" stroke="#88e04a" stroke-width="1" fill-opacity="0.85"/><circle cx="162.3" cy="148.0" r="1.3" fill="#f4f4f4"/><line x1="188.6" y1="159.1" x2="189.5" y2="144.9" stroke="#88e04a" stroke-width="2"/><ellipse cx="190.3" cy="132.3" rx="12.6" ry="8.5" transform="rotate(633.7 190.3 132.3)" fill="#6ea43e" stroke="#88e04a" stroke-width="1" fill-opacity="0.85"/><circle cx="190.3" cy="132.3" r="1.3" fill="#f4f4f4"/><circle cx="204.0" cy="149.3" r="5.3" fill="#6ea43e" stroke="#88e04a" stroke-width="1" fill-opacity="0.85"/><circle cx="176.6" cy="160.8" r="5.4" fill="#6ea43e" stroke="#88e04a" stroke-width="1" fill-opacity="0.85"/><circle cx="179.5" cy="175.1" r="5.7" fill="#6ea43e" stroke="#88e04a" stroke-width="1" fill-opacity="0.85"/><circle cx="188.6" cy="159.1" r="6.6" fill="#6ea43e"/><rect x="166.9" y="118.8" width="14" height="4.5" fill="#1a1a1a"/><rect x="167.9" y="120.0" width="11" height="2" fill="#88e04a"/><line x1="292.3" y1="155.7" x2="284.2" y2="162.6" stroke="#70e050" stroke-width="2"/><ellipse cx="277.0" cy="168.7" rx="9.4" ry="6.5" transform="rotate(139.7 277.0 168.7)" fill="#62a448" stroke="#70e050" stroke-width="1" fill-opacity="0.85"/><circle cx="277.0" cy="168.7" r="1.3" fill="#f4f4f4"/><line x1="292.3" y1="155.7" x2="282.9" y2="154.9" stroke="#70e050" stroke-width="2"/><ellipse cx="274.6" cy="154.2" rx="8.4" ry="5.1" transform="rotate(184.7 274.6 154.2)" fill="#62a448" stroke="#70e050" stroke-width="1" fill-opacity="0.85"/><circle cx="274.6" cy="154.2" r="1.3" fill="#f4f4f4"/><line x1="292.3" y1="155.7" x2="289.9" y2="145.6" stroke="#70e050" stroke-width="2"/><ellipse cx="287.8" cy="136.6" rx="9.3" ry="5.7" transform="rotate(256.7 287.8 136.6)" fill="#62a448" stroke="#70e050" stroke-width="1" fill-opacity="0.85"/><circle cx="287.8" cy="136.6" r="1.3" fill="#f4f4f4"/><line x1="292.3" y1="155.7" x2="298.6" y2="147.1" stroke="#70e050" stroke-width="2"/><ellipse cx="304.1" cy="139.4" rx="9.5" ry="6.4" transform="rotate(305.9 304.1 139.4)" fill="#62a448" stroke="#70e050" stroke-width="1" fill-opacity="0.85"/><circle cx="304.1" cy="139.4" r="1.3" fill="#f4f4f4"/><line x1="292.3" y1="155.7" x2="301.9" y2="152.9" stroke="#70e050" stroke-width="2"/><ellipse cx="310.5" cy="150.5" rx="8.9" ry="5.4" transform="rotate(344.0 310.5 150.5)" fill="#62a448" stroke="#70e050" stroke-width="1" fill-opacity="0.85"/><circle cx="310.5" cy="150.5" r="1.3" fill="#f4f4f4"/><line x1="292.3" y1="155.7" x2="301.9" y2="160.4" stroke="#70e050" stroke-width="2"/><ellipse cx="310.4" cy="164.5" rx="9.5" ry="6.4" transform="rotate(386.0 310.4 164.5)" fill="#62a448" stroke="#70e050" stroke-width="1" fill-opacity="0.85"/><circle cx="310.4" cy="164.5" r="1.3" fill="#f4f4f4"/><line x1="292.3" y1="155.7" x2="292.0" y2="166.3" stroke="#70e050" stroke-width="2"/><ellipse cx="291.7" cy="175.7" rx="9.4" ry="6.1" transform="rotate(451.8 291.7 175.7)" fill="#62a448" stroke="#70e050" stroke-width="1" fill-opacity="0.85"/><circle cx="291.7" cy="175.7" r="1.3" fill="#f4f4f4"/><circle cx="300.8" cy="146.8" r="2.9" fill="#62a448" stroke="#70e050" stroke-width="1" fill-opacity="0.85"/><circle cx="292.2" cy="164.4" r="3.0" fill="#62a448" stroke="#70e050" stroke-width="1" fill-opacity="0.85"/><circle cx="285.0" cy="151.3" r="3.2" fill="#62a448" stroke="#70e050" stroke-width="1" fill-opacity="0.85"/><circle cx="292.3" cy="155.7" r="4.3" fill="#62a448"/><rect x="256.4" y="118.8" width="14" height="4.5" fill="#1a1a1a"/><rect x="257.4" y="120.0" width="11" height="2" fill="#70e050"/><line x1="382.2" y1="155.7" x2="389.3" y2="167.4" stroke="#66e070" stroke-width="2"/><ellipse cx="395.7" cy="177.8" rx="12.2" ry="7.9" transform="rotate(58.7 395.7 177.8)" fill="#5aa458" stroke="#66e070" stroke-width="1" fill-opacity="0.85"/><circle cx="395.7" cy="177.8" r="1.3" fill="#f4f4f4"/><line x1="382.2" y1="155.7" x2="381.0" y2="170.5" stroke="#66e070" stroke-width="2"/><ellipse cx="380.0" cy="183.7" rx="13.2" ry="8.5" transform="rotate(94.5 380.0 183.7)" fill="#5aa458" stroke="#66e070" stroke-width="1" fill-opacity="0.85"/><circle cx="380.0" cy="183.7" r="1.3" fill="#f4f4f4"/><line x1="382.2" y1="155.7" x2="370.2" y2="162.9" stroke="#66e070" stroke-width="2"/><ellipse cx="359.5" cy="169.4" rx="12.5" ry="8.2" transform="rotate(148.9 359.5 169.4)" fill="#5aa458" stroke="#66e070" stroke-width="1" fill-opacity="0.85"/><circle cx="359.5" cy="169.4" r="1.3" fill="#f4f4f4"/><line x1="382.2" y1="155.7" x2="369.2" y2="155.1" stroke="#66e070" stroke-width="2"/><ellipse cx="357.6" cy="154.5" rx="11.6" ry="7.5" transform="rotate(182.8 357.6 154.5)" fill="#5aa458" stroke="#66e070" stroke-width="1" fill-opacity="0.85"/><circle cx="357.6" cy="154.5" r="1.3" fill="#f4f4f4"/><line x1="382.2" y1="155.7" x2="372.0" y2="147.6" stroke="#66e070" stroke-width="2"/><ellipse cx="362.9" cy="140.5" rx="11.6" ry="8.0" transform="rotate(218.3 362.9 140.5)" fill="#5aa458" stroke="#66e070" stroke-width="1" fill-opacity="0.85"/><circle cx="362.9" cy="140.5" r="1.3" fill="#f4f4f4"/><line x1="382.2" y1="155.7" x2="380.5" y2="141.8" stroke="#66e070" stroke-width="2"/><ellipse cx="379.0" cy="129.5" rx="12.4" ry="8.5" transform="rotate(263.0 379.0 129.5)" fill="#5aa458" stroke="#66e070" stroke-width="1" fill-opacity="0.85"/><circle cx="379.0" cy="129.5" r="1.3" fill="#f4f4f4"/><line x1="382.2" y1="155.7" x2="392.5" y2="146.7" stroke="#66e070" stroke-width="2"/><ellipse cx="401.6" cy="138.7" rx="12.1" ry="8.0" transform="rotate(318.8 401.6 138.7)" fill="#5aa458" stroke="#66e070" stroke-width="1" fill-opacity="0.85"/><circle cx="401.6" cy="138.7" r="1.3" fill="#f4f4f4"/><line x1="382.2" y1="155.7" x2="396.8" y2="156.7" stroke="#66e070" stroke-width="2"/><ellipse cx="409.7" cy="157.5" rx="13.0" ry="7.9" transform="rotate(363.7 409.7 157.5)" fill="#5aa458" stroke="#66e070" stroke-width="1" fill-opacity="0.85"/><circle cx="409.7" cy="157.5" r="1.3" fill="#f4f4f4"/><circle cx="371.2" cy="151.3" r="4.2" fill="#5aa458" stroke="#66e070" stroke-width="1" fill-opacity="0.85"/><circle cx="384.2" cy="141.5" r="4.7" fill="#5aa458" stroke="#66e070" stroke-width="1" fill-opacity="0.85"/><circle cx="383.3" cy="137.6" r="4.5" fill="#5aa458" stroke="#66e070" stroke-width="1" fill-opacity="0.85"/><circle cx="382.2" cy="155.7" r="6.1" fill="#5aa458"/><rect x="337.0" y="118.8" width="14" height="4.5" fill="#1a1a1a"/><rect x="338.0" y="120.0" width="11" height="2" fill="#66e070"/><line x1="479.0" y1="152.2" x2="467.8" y2="142.6" stroke="#66e0a0" stroke-width="2"/><ellipse cx="457.8" cy="134.0" rx="13.1" ry="8.9" transform="rotate(220.7 457.8 134.0)" fill="#5aa47a" stroke="#66e0a0" stroke-width="1" fill-opacity="0.85"/><circle cx="457.8" cy="134.0" r="1.3" fill="#f4f4f4"/><line x1="479.0" y1="152.2" x2="481.4" y2="137.6" stroke="#66e0a0" stroke-width="2"/><ellipse cx="483.5" cy="124.5" rx="13.2" ry="8.6" transform="rotate(279.2 483.5 124.5)" fill="#5aa47a" stroke="#66e0a0" stroke-width="1" fill-opacity="0.85"/><circle cx="483.5" cy="124.5" r="1.3" fill="#f4f4f4"/><line x1="479.0" y1="152.2" x2="494.1" y2="150.3" stroke="#66e0a0" stroke-width="2"/><ellipse cx="507.5" cy="148.6" rx="13.5" ry="9.5" transform="rotate(352.9 507.5 148.6)" fill="#5aa47a" stroke="#66e0a0" stroke-width="1" fill-opacity="0.85"/><circle cx="507.5" cy="148.6" r="1.3" fill="#f4f4f4"/><line x1="479.0" y1="152.2" x2="487.6" y2="163.6" stroke="#66e0a0" stroke-width="2"/><ellipse cx="495.2" cy="173.7" rx="12.7" ry="8.4" transform="rotate(412.9 495.2 173.7)" fill="#5aa47a" stroke="#66e0a0" stroke-width="1" fill-opacity="0.85"/><circle cx="495.2" cy="173.7" r="1.3" fill="#f4f4f4"/><line x1="479.0" y1="152.2" x2="473.0" y2="166.5" stroke="#66e0a0" stroke-width="2"/><ellipse cx="467.6" cy="179.2" rx="13.8" ry="8.4" transform="rotate(472.9 467.6 179.2)" fill="#5aa47a" stroke="#66e0a0" stroke-width="1" fill-opacity="0.85"/><circle cx="467.6" cy="179.2" r="1.3" fill="#f4f4f4"/><line x1="479.0" y1="152.2" x2="466.3" y2="159.5" stroke="#66e0a0" stroke-width="2"/><ellipse cx="455.1" cy="166.1" rx="13.0" ry="7.8" transform="rotate(509.9 455.1 166.1)" fill="#5aa47a" stroke="#66e0a0" stroke-width="1" fill-opacity="0.85"/><circle cx="455.1" cy="166.1" r="1.3" fill="#f4f4f4"/><circle cx="479.6" cy="162.9" r="5.1" fill="#5aa47a" stroke="#66e0a0" stroke-width="1" fill-opacity="0.85"/><circle cx="483.0" cy="133.7" r="4.2" fill="#5aa47a" stroke="#66e0a0" stroke-width="1" fill-opacity="0.85"/><circle cx="475.5" cy="136.0" r="4.2" fill="#5aa47a" stroke="#66e0a0" stroke-width="1" fill-opacity="0.85"/><circle cx="479.0" cy="152.2" r="6.4" fill="#5aa47a"/><rect x="435.6" y="118.8" width="14" height="4.5" fill="#1a1a1a"/><rect x="436.6" y="120.0" width="11" height="2" fill="#66e0a0"/><line x1="91.7" y1="256.0" x2="105.0" y2="248.6" stroke="#70e0c8" stroke-width="2"/><ellipse cx="116.8" cy="242.0" rx="13.5" ry="9.6" transform="rotate(330.9 116.8 242.0)" fill="#68a89a" stroke="#70e0c8" stroke-width="1" fill-opacity="0.85"/><circle cx="116.8" cy="242.0" r="1.3" fill="#f4f4f4"/><line x1="91.7" y1="256.0" x2="107.5" y2="256.0" stroke="#70e0c8" stroke-width="2"/><ellipse cx="121.6" cy="256.0" rx="14.1" ry="10.1" transform="rotate(360.0 121.6 256.0)" fill="#68a89a" stroke="#70e0c8" stroke-width="1" fill-opacity="0.85"/><circle cx="121.6" cy="256.0" r="1.3" fill="#f4f4f4"/><line x1="91.7" y1="256.0" x2="99.9" y2="268.7" stroke="#70e0c8" stroke-width="2"/><ellipse cx="107.2" cy="279.9" rx="13.4" ry="8.7" transform="rotate(417.1 107.2 279.9)" fill="#68a89a" stroke="#70e0c8" stroke-width="1" fill-opacity="0.85"/><circle cx="107.2" cy="279.9" r="1.3" fill="#f4f4f4"/><line x1="91.7" y1="256.0" x2="90.8" y2="271.5" stroke="#70e0c8" stroke-width="2"/><ellipse cx="90.0" cy="285.2" rx="13.8" ry="8.5" transform="rotate(453.3 90.0 285.2)" fill="#68a89a" stroke="#70e0c8" stroke-width="1" fill-opacity="0.85"/><circle cx="90.0" cy="285.2" r="1.3" fill="#f4f4f4"/><line x1="91.7" y1="256.0" x2="80.6" y2="268.0" stroke="#70e0c8" stroke-width="2"/><ellipse cx="70.7" cy="278.7" rx="14.6" ry="8.7" transform="rotate(492.7 70.7 278.7)" fill="#68a89a" stroke="#70e0c8" stroke-width="1" fill-opacity="0.85"/><circle cx="70.7" cy="278.7" r="1.3" fill="#f4f4f4"/><line x1="91.7" y1="256.0" x2="76.0" y2="254.8" stroke="#70e0c8" stroke-width="2"/><ellipse cx="62.1" cy="253.8" rx="14.0" ry="8.3" transform="rotate(544.3 62.1 253.8)" fill="#68a89a" stroke="#70e0c8" stroke-width="1" fill-opacity="0.85"/><circle cx="62.1" cy="253.8" r="1.3" fill="#f4f4f4"/><line x1="91.7" y1="256.0" x2="79.9" y2="245.0" stroke="#70e0c8" stroke-width="2"/><ellipse cx="69.4" cy="235.1" rx="14.4" ry="9.4" transform="rotate(583.1 69.4 235.1)" fill="#68a89a" stroke="#70e0c8" stroke-width="1" fill-opacity="0.85"/><circle cx="69.4" cy="235.1" r="1.3" fill="#f4f4f4"/><line x1="91.7" y1="256.0" x2="88.9" y2="239.2" stroke="#70e0c8" stroke-width="2"/><ellipse cx="86.5" cy="224.3" rx="15.1" ry="10.5" transform="rotate(620.6 86.5 224.3)" fill="#68a89a" stroke="#70e0c8" stroke-width="1" fill-opacity="0.85"/><circle cx="86.5" cy="224.3" r="1.3" fill="#f4f4f4"/><circle cx="103.4" cy="253.9" r="4.8" fill="#68a89a" stroke="#70e0c8" stroke-width="1" fill-opacity="0.85"/><circle cx="110.2" cy="260.7" r="4.8" fill="#68a89a" stroke="#70e0c8" stroke-width="1" fill-opacity="0.85"/><circle cx="102.2" cy="267.1" r="5.9" fill="#68a89a" stroke="#70e0c8" stroke-width="1" fill-opacity="0.85"/><circle cx="91.7" cy="256.0" r="6.9" fill="#68a89a"/><rect x="94.1" y="209.8" width="14" height="4.5" fill="#1a1a1a"/><rect x="95.1" y="211.0" width="11" height="2" fill="#70e0c8"/><line x1="294.0" y1="259.4" x2="298.3" y2="246.1" stroke="#7ab0e0" stroke-width="2"/><ellipse cx="302.2" cy="234.3" rx="12.4" ry="8.8" transform="rotate(288.1 302.2 234.3)" fill="#6a889c" stroke="#7ab0e0" stroke-width="1" fill-opacity="0.85"/><circle cx="302.2" cy="234.3" r="1.3" fill="#f4f4f4"/><line x1="294.0" y1="259.4" x2="308.9" y2="256.3" stroke="#7ab0e0" stroke-width="2"/><ellipse cx="322.1" cy="253.5" rx="13.5" ry="8.2" transform="rotate(348.2 322.1 253.5)" fill="#6a889c" stroke="#7ab0e0" stroke-width="1" fill-opacity="0.85"/><circle cx="322.1" cy="253.5" r="1.3" fill="#f4f4f4"/><line x1="294.0" y1="259.4" x2="307.7" y2="265.9" stroke="#7ab0e0" stroke-width="2"/><ellipse cx="319.9" cy="271.6" rx="13.5" ry="8.7" transform="rotate(385.3 319.9 271.6)" fill="#6a889c" stroke="#7ab0e0" stroke-width="1" fill-opacity="0.85"/><circle cx="319.9" cy="271.6" r="1.3" fill="#f4f4f4"/><line x1="294.0" y1="259.4" x2="297.5" y2="274.7" stroke="#7ab0e0" stroke-width="2"/><ellipse cx="300.6" cy="288.3" rx="14.0" ry="9.4" transform="rotate(437.1 300.6 288.3)" fill="#6a889c" stroke="#7ab0e0" stroke-width="1" fill-opacity="0.85"/><circle cx="300.6" cy="288.3" r="1.3" fill="#f4f4f4"/><line x1="294.0" y1="259.4" x2="282.1" y2="266.5" stroke="#7ab0e0" stroke-width="2"/><ellipse cx="271.6" cy="272.9" rx="12.3" ry="8.6" transform="rotate(509.0 271.6 272.9)" fill="#6a889c" stroke="#7ab0e0" stroke-width="1" fill-opacity="0.85"/><circle cx="271.6" cy="272.9" r="1.3" fill="#f4f4f4"/><line x1="294.0" y1="259.4" x2="278.5" y2="259.4" stroke="#7ab0e0" stroke-width="2"/><ellipse cx="264.6" cy="259.5" rx="13.8" ry="9.0" transform="rotate(539.8 264.6 259.5)" fill="#6a889c" stroke="#7ab0e0" stroke-width="1" fill-opacity="0.85"/><circle cx="264.6" cy="259.5" r="1.3" fill="#f4f4f4"/><line x1="294.0" y1="259.4" x2="286.3" y2="246.7" stroke="#7ab0e0" stroke-width="2"/><ellipse cx="279.5" cy="235.3" rx="13.2" ry="9.4" transform="rotate(598.9 279.5 235.3)" fill="#6a889c" stroke="#7ab0e0" stroke-width="1" fill-opacity="0.85"/><circle cx="279.5" cy="235.3" r="1.3" fill="#f4f4f4"/><circle cx="292.7" cy="270.6" r="4.8" fill="#6a889c" stroke="#7ab0e0" stroke-width="1" fill-opacity="0.85"/><circle cx="294.8" cy="270.5" r="4.3" fill="#6a889c" stroke="#7ab0e0" stroke-width="1" fill-opacity="0.85"/><circle cx="305.4" cy="263.1" r="4.5" fill="#6a889c" stroke="#7ab0e0" stroke-width="1" fill-opacity="0.85"/><circle cx="294.0" cy="259.4" r="6.4" fill="#6a889c"/><rect x="256.9" y="209.8" width="14" height="4.5" fill="#1a1a1a"/><rect x="257.9" y="211.0" width="11" height="2" fill="#7ab0e0"/><line x1="382.2" y1="256.0" x2="376.0" y2="268.1" stroke="#6a60e0" stroke-width="2"/><ellipse cx="370.5" cy="278.9" rx="12.1" ry="7.9" transform="rotate(117.1 370.5 278.9)" fill="#5c5c9c" stroke="#6a60e0" stroke-width="1" fill-opacity="0.85"/><circle cx="370.5" cy="278.9" r="1.3" fill="#f4f4f4"/><line x1="382.2" y1="256.0" x2="370.1" y2="262.4" stroke="#6a60e0" stroke-width="2"/><ellipse cx="359.3" cy="268.1" rx="12.2" ry="7.3" transform="rotate(152.2 359.3 268.1)" fill="#5c5c9c" stroke="#6a60e0" stroke-width="1" fill-opacity="0.85"/><circle cx="359.3" cy="268.1" r="1.3" fill="#f4f4f4"/><line x1="382.2" y1="256.0" x2="370.5" y2="250.4" stroke="#6a60e0" stroke-width="2"/><ellipse cx="360.0" cy="245.3" rx="11.6" ry="7.9" transform="rotate(205.7 360.0 245.3)" fill="#5c5c9c" stroke="#6a60e0" stroke-width="1" fill-opacity="0.85"/><circle cx="360.0" cy="245.3" r="1.3" fill="#f4f4f4"/><line x1="382.2" y1="256.0" x2="381.2" y2="242.7" stroke="#6a60e0" stroke-width="2"/><ellipse cx="380.2" cy="230.8" rx="11.9" ry="7.8" transform="rotate(265.5 380.2 230.8)" fill="#5c5c9c" stroke="#6a60e0" stroke-width="1" fill-opacity="0.85"/><circle cx="380.2" cy="230.8" r="1.3" fill="#f4f4f4"/><line x1="382.2" y1="256.0" x2="393.4" y2="248.9" stroke="#6a60e0" stroke-width="2"/><ellipse cx="403.3" cy="242.7" rx="11.7" ry="8.2" transform="rotate(327.7 403.3 242.7)" fill="#5c5c9c" stroke="#6a60e0" stroke-width="1" fill-opacity="0.85"/><circle cx="403.3" cy="242.7" r="1.3" fill="#f4f4f4"/><line x1="382.2" y1="256.0" x2="396.2" y2="257.2" stroke="#6a60e0" stroke-width="2"/><ellipse cx="408.6" cy="258.3" rx="12.5" ry="8.7" transform="rotate(365.0 408.6 258.3)" fill="#5c5c9c" stroke="#6a60e0" stroke-width="1" fill-opacity="0.85"/><circle cx="408.6" cy="258.3" r="1.3" fill="#f4f4f4"/><line x1="382.2" y1="256.0" x2="390.2" y2="267.6" stroke="#6a60e0" stroke-width="2"/><ellipse cx="397.3" cy="277.8" rx="12.5" ry="8.5" transform="rotate(415.4 397.3 277.8)" fill="#5c5c9c" stroke="#6a60e0" stroke-width="1" fill-opacity="0.85"/><circle cx="397.3" cy="277.8" r="1.3" fill="#f4f4f4"/><circle cx="394.9" cy="254.6" r="5.1" fill="#5c5c9c" stroke="#6a60e0" stroke-width="1" fill-opacity="0.85"/><circle cx="378.0" cy="241.0" r="4.4" fill="#5c5c9c" stroke="#6a60e0" stroke-width="1" fill-opacity="0.85"/><circle cx="376.4" cy="264.2" r="4.0" fill="#5c5c9c" stroke="#6a60e0" stroke-width="1" fill-opacity="0.85"/><circle cx="382.2" cy="256.0" r="6.1" fill="#5c5c9c"/><rect x="379.6" y="209.8" width="14" height="4.5" fill="#1a1a1a"/><rect x="380.6" y="211.0" width="11" height="2" fill="#6a60e0"/><line x1="475.5" y1="245.6" x2="488.1" y2="253.6" stroke="#8a58e0" stroke-width="2"/><ellipse cx="499.4" cy="260.6" rx="13.3" ry="8.2" transform="rotate(32.2 499.4 260.6)" fill="#68589c" stroke="#8a58e0" stroke-width="1" fill-opacity="0.85"/><circle cx="499.4" cy="260.6" r="1.3" fill="#f4f4f4"/><line x1="475.5" y1="245.6" x2="483.9" y2="259.5" stroke="#8a58e0" stroke-width="2"/><ellipse cx="491.4" cy="271.9" rx="14.5" ry="10.2" transform="rotate(58.8 491.4 271.9)" fill="#68589c" stroke="#8a58e0" stroke-width="1" fill-opacity="0.85"/><circle cx="491.4" cy="271.9" r="1.3" fill="#f4f4f4"/><line x1="475.5" y1="245.6" x2="467.9" y2="258.6" stroke="#8a58e0" stroke-width="2"/><ellipse cx="461.2" cy="270.1" rx="13.3" ry="8.3" transform="rotate(120.2 461.2 270.1)" fill="#68589c" stroke="#8a58e0" stroke-width="1" fill-opacity="0.85"/><circle cx="461.2" cy="270.1" r="1.3" fill="#f4f4f4"/><line x1="475.5" y1="245.6" x2="461.6" y2="252.2" stroke="#8a58e0" stroke-width="2"/><ellipse cx="449.2" cy="258.1" rx="13.7" ry="8.4" transform="rotate(154.7 449.2 258.1)" fill="#68589c" stroke="#8a58e0" stroke-width="1" fill-opacity="0.85"/><circle cx="449.2" cy="258.1" r="1.3" fill="#f4f4f4"/><line x1="475.5" y1="245.6" x2="461.8" y2="239.5" stroke="#8a58e0" stroke-width="2"/><ellipse cx="449.7" cy="234.1" rx="13.3" ry="9.5" transform="rotate(203.9 449.7 234.1)" fill="#68589c" stroke="#8a58e0" stroke-width="1" fill-opacity="0.85"/><circle cx="449.7" cy="234.1" r="1.3" fill="#f4f4f4"/><line x1="475.5" y1="245.6" x2="473.8" y2="230.1" stroke="#8a58e0" stroke-width="2"/><ellipse cx="472.3" cy="216.3" rx="13.9" ry="8.7" transform="rotate(263.7 472.3 216.3)" fill="#68589c" stroke="#8a58e0" stroke-width="1" fill-opacity="0.85"/><circle cx="472.3" cy="216.3" r="1.3" fill="#f4f4f4"/><line x1="475.5" y1="245.6" x2="484.9" y2="233.8" stroke="#8a58e0" stroke-width="2"/><ellipse cx="493.2" cy="223.3" rx="13.4" ry="8.5" transform="rotate(308.5 493.2 223.3)" fill="#68589c" stroke="#8a58e0" stroke-width="1" fill-opacity="0.85"/><circle cx="493.2" cy="223.3" r="1.3" fill="#f4f4f4"/><line x1="475.5" y1="245.6" x2="488.2" y2="237.2" stroke="#8a58e0" stroke-width="2"/><ellipse cx="499.5" cy="229.7" rx="13.5" ry="8.8" transform="rotate(326.5 499.5 229.7)" fill="#68589c" stroke="#8a58e0" stroke-width="1" fill-opacity="0.85"/><circle cx="499.5" cy="229.7" r="1.3" fill="#f4f4f4"/><circle cx="462.9" cy="245.4" r="5.0" fill="#68589c" stroke="#8a58e0" stroke-width="1" fill-opacity="0.85"/><circle cx="488.8" cy="246.0" r="4.4" fill="#68589c" stroke="#8a58e0" stroke-width="1" fill-opacity="0.85"/><circle cx="466.7" cy="252.1" r="4.2" fill="#68589c" stroke="#8a58e0" stroke-width="1" fill-opacity="0.85"/><circle cx="475.5" cy="245.6" r="6.7" fill="#68589c"/><rect x="442.7" y="209.8" width="14" height="4.5" fill="#1a1a1a"/><rect x="443.7" y="211.0" width="11" height="2" fill="#8a58e0"/><line x1="91.7" y1="349.3" x2="89.6" y2="359.2" stroke="#a050e0" stroke-width="2"/><ellipse cx="87.7" cy="367.9" rx="9.0" ry="5.9" transform="rotate(102.0 87.7 367.9)" fill="#74589a" stroke="#a050e0" stroke-width="1" fill-opacity="0.85"/><circle cx="87.7" cy="367.9" r="1.3" fill="#f4f4f4"/><line x1="91.7" y1="349.3" x2="81.5" y2="349.9" stroke="#a050e0" stroke-width="2"/><ellipse cx="72.5" cy="350.5" rx="9.1" ry="6.2" transform="rotate(176.5 72.5 350.5)" fill="#74589a" stroke="#a050e0" stroke-width="1" fill-opacity="0.85"/><circle cx="72.5" cy="350.5" r="1.3" fill="#f4f4f4"/><line x1="91.7" y1="349.3" x2="86.8" y2="340.8" stroke="#a050e0" stroke-width="2"/><ellipse cx="82.5" cy="333.2" rx="8.7" ry="5.5" transform="rotate(240.1 82.5 333.2)" fill="#74589a" stroke="#a050e0" stroke-width="1" fill-opacity="0.85"/><circle cx="82.5" cy="333.2" r="1.3" fill="#f4f4f4"/><line x1="91.7" y1="349.3" x2="96.9" y2="341.4" stroke="#a050e0" stroke-width="2"/><ellipse cx="101.5" cy="334.3" rx="8.4" ry="5.7" transform="rotate(303.1 101.5 334.3)" fill="#74589a" stroke="#a050e0" stroke-width="1" fill-opacity="0.85"/><circle cx="101.5" cy="334.3" r="1.3" fill="#f4f4f4"/><line x1="91.7" y1="349.3" x2="100.9" y2="348.3" stroke="#a050e0" stroke-width="2"/><ellipse cx="109.2" cy="347.3" rx="8.3" ry="5.8" transform="rotate(353.5 109.2 347.3)" fill="#74589a" stroke="#a050e0" stroke-width="1" fill-opacity="0.85"/><circle cx="109.2" cy="347.3" r="1.3" fill="#f4f4f4"/><line x1="91.7" y1="349.3" x2="96.7" y2="358.1" stroke="#a050e0" stroke-width="2"/><ellipse cx="101.1" cy="366.0" rx="9.0" ry="6.2" transform="rotate(420.5 101.1 366.0)" fill="#74589a" stroke="#a050e0" stroke-width="1" fill-opacity="0.85"/><circle cx="101.1" cy="366.0" r="1.3" fill="#f4f4f4"/><circle cx="94.6" cy="342.2" r="3.3" fill="#74589a" stroke="#a050e0" stroke-width="1" fill-opacity="0.85"/><circle cx="79.3" cy="349.0" r="3.6" fill="#74589a" stroke="#a050e0" stroke-width="1" fill-opacity="0.85"/><circle cx="96.6" cy="339.8" r="3.7" fill="#74589a" stroke="#a050e0" stroke-width="1" fill-opacity="0.85"/><circle cx="91.7" cy="349.3" r="4.3" fill="#74589a"/><rect x="66.8" y="306.8" width="14" height="4.5" fill="#1a1a1a"/><rect x="67.8" y="308.0" width="11" height="2" fill="#a050e0"/><line x1="188.6" y1="349.3" x2="184.0" y2="335.9" stroke="#d050d0" stroke-width="2"/><ellipse cx="180.0" cy="323.9" rx="12.6" ry="7.5" transform="rotate(251.3 180.0 323.9)" fill="#8a5a92" stroke="#d050d0" stroke-width="1" fill-opacity="0.85"/><circle cx="180.0" cy="323.9" r="1.3" fill="#f4f4f4"/><line x1="188.6" y1="349.3" x2="192.8" y2="335.5" stroke="#d050d0" stroke-width="2"/><ellipse cx="196.6" cy="323.2" rx="12.9" ry="7.8" transform="rotate(287.0 196.6 323.2)" fill="#8a5a92" stroke="#d050d0" stroke-width="1" fill-opacity="0.85"/><circle cx="196.6" cy="323.2" r="1.3" fill="#f4f4f4"/><line x1="188.6" y1="349.3" x2="203.5" y2="348.8" stroke="#d050d0" stroke-width="2"/><ellipse cx="216.7" cy="348.4" rx="13.2" ry="8.9" transform="rotate(358.1 216.7 348.4)" fill="#8a5a92" stroke="#d050d0" stroke-width="1" fill-opacity="0.85"/><circle cx="216.7" cy="348.4" r="1.3" fill="#f4f4f4"/><line x1="188.6" y1="349.3" x2="199.6" y2="359.8" stroke="#d050d0" stroke-width="2"/><ellipse cx="209.3" cy="369.1" rx="13.5" ry="8.8" transform="rotate(403.7 209.3 369.1)" fill="#8a5a92" stroke="#d050d0" stroke-width="1" fill-opacity="0.85"/><circle cx="209.3" cy="369.1" r="1.3" fill="#f4f4f4"/><line x1="188.6" y1="349.3" x2="191.9" y2="364.3" stroke="#d050d0" stroke-width="2"/><ellipse cx="194.8" cy="377.7" rx="13.7" ry="9.4" transform="rotate(437.6 194.8 377.7)" fill="#8a5a92" stroke="#d050d0" stroke-width="1" fill-opacity="0.85"/><circle cx="194.8" cy="377.7" r="1.3" fill="#f4f4f4"/><line x1="188.6" y1="349.3" x2="176.7" y2="358.2" stroke="#d050d0" stroke-width="2"/><ellipse cx="166.2" cy="366.1" rx="13.2" ry="8.9" transform="rotate(503.1 166.2 366.1)" fill="#8a5a92" stroke="#d050d0" stroke-width="1" fill-opacity="0.85"/><circle cx="166.2" cy="366.1" r="1.3" fill="#f4f4f4"/><line x1="188.6" y1="349.3" x2="173.3" y2="348.7" stroke="#d050d0" stroke-width="2"/><ellipse cx="159.8" cy="348.2" rx="13.6" ry="8.5" transform="rotate(542.3 159.8 348.2)" fill="#8a5a92" stroke="#d050d0" stroke-width="1" fill-opacity="0.85"/><circle cx="159.8" cy="348.2" r="1.3" fill="#f4f4f4"/><circle cx="199.9" cy="355.0" r="5.2" fill="#8a5a92" stroke="#d050d0" stroke-width="1" fill-opacity="0.85"/><circle cx="193.4" cy="366.0" r="5.6" fill="#8a5a92" stroke="#d050d0" stroke-width="1" fill-opacity="0.85"/><circle cx="174.8" cy="349.8" r="4.8" fill="#8a5a92" stroke="#d050d0" stroke-width="1" fill-opacity="0.85"/><circle cx="188.6" cy="349.3" r="6.4" fill="#8a5a92"/><rect x="170.9" y="306.8" width="14" height="4.5" fill="#1a1a1a"/><rect x="171.9" y="308.0" width="11" height="2" fill="#d050d0"/><line x1="383.9" y1="352.8" x2="379.9" y2="339.1" stroke="#e05090" stroke-width="2"/><ellipse cx="376.3" cy="327.0" rx="12.7" ry="8.5" transform="rotate(253.6 376.3 327.0)" fill="#9a5a78" stroke="#e05090" stroke-width="1" fill-opacity="0.85"/><circle cx="376.3" cy="327.0" r="1.3" fill="#f4f4f4"/><line x1="383.9" y1="352.8" x2="387.5" y2="340.0" stroke="#e05090" stroke-width="2"/><ellipse cx="390.7" cy="328.6" rx="11.8" ry="7.4" transform="rotate(285.7 390.7 328.6)" fill="#9a5a78" stroke="#e05090" stroke-width="1" fill-opacity="0.85"/><circle cx="390.7" cy="328.6" r="1.3" fill="#f4f4f4"/><line x1="383.9" y1="352.8" x2="397.5" y2="351.8" stroke="#e05090" stroke-width="2"/><ellipse cx="409.6" cy="350.9" rx="12.1" ry="8.0" transform="rotate(355.8 409.6 350.9)" fill="#9a5a78" stroke="#e05090" stroke-width="1" fill-opacity="0.85"/><circle cx="409.6" cy="350.9" r="1.3" fill="#f4f4f4"/><line x1="383.9" y1="352.8" x2="395.6" y2="358.7" stroke="#e05090" stroke-width="2"/><ellipse cx="406.0" cy="364.0" rx="11.7" ry="7.3" transform="rotate(386.8 406.0 364.0)" fill="#9a5a78" stroke="#e05090" stroke-width="1" fill-opacity="0.85"/><circle cx="406.0" cy="364.0" r="1.3" fill="#f4f4f4"/><line x1="383.9" y1="352.8" x2="382.2" y2="367.1" stroke="#e05090" stroke-width="2"/><ellipse cx="380.7" cy="379.8" rx="12.8" ry="8.7" transform="rotate(456.7 380.7 379.8)" fill="#9a5a78" stroke="#e05090" stroke-width="1" fill-opacity="0.85"/><circle cx="380.7" cy="379.8" r="1.3" fill="#f4f4f4"/><line x1="383.9" y1="352.8" x2="373.6" y2="362.3" stroke="#e05090" stroke-width="2"/><ellipse cx="364.4" cy="370.8" rx="12.5" ry="8.1" transform="rotate(497.4 364.4 370.8)" fill="#9a5a78" stroke="#e05090" stroke-width="1" fill-opacity="0.85"/><circle cx="364.4" cy="370.8" r="1.3" fill="#f4f4f4"/><line x1="383.9" y1="352.8" x2="371.0" y2="349.7" stroke="#e05090" stroke-width="2"/><ellipse cx="359.6" cy="346.9" rx="11.8" ry="8.3" transform="rotate(553.8 359.6 346.9)" fill="#9a5a78" stroke="#e05090" stroke-width="1" fill-opacity="0.85"/><circle cx="359.6" cy="346.9" r="1.3" fill="#f4f4f4"/><circle cx="389.8" cy="370.6" r="5.2" fill="#9a5a78" stroke="#e05090" stroke-width="1" fill-opacity="0.85"/><circle cx="397.7" cy="354.3" r="5.0" fill="#9a5a78" stroke="#e05090" stroke-width="1" fill-opacity="0.85"/><circle cx="397.4" cy="350.1" r="4.2" fill="#9a5a78" stroke="#e05090" stroke-width="1" fill-opacity="0.85"/><circle cx="383.9" cy="352.8" r="6.1" fill="#9a5a78"/><rect x="343.8" y="306.8" width="14" height="4.5" fill="#1a1a1a"/><rect x="344.8" y="308.0" width="11" height="2" fill="#e05090"/><line x1="477.3" y1="342.4" x2="477.8" y2="355.8" stroke="#e05858" stroke-width="2"/><ellipse cx="478.2" cy="367.7" rx="11.9" ry="8.0" transform="rotate(88.0 478.2 367.7)" fill="#9a5a5a" stroke="#e05858" stroke-width="1" fill-opacity="0.85"/><circle cx="478.2" cy="367.7" r="1.3" fill="#f4f4f4"/><line x1="477.3" y1="342.4" x2="470.9" y2="354.9" stroke="#e05858" stroke-width="2"/><ellipse cx="465.3" cy="366.1" rx="12.5" ry="8.9" transform="rotate(116.9 465.3 366.1)" fill="#9a5a5a" stroke="#e05858" stroke-width="1" fill-opacity="0.85"/><circle cx="465.3" cy="366.1" r="1.3" fill="#f4f4f4"/><line x1="477.3" y1="342.4" x2="462.9" y2="345.4" stroke="#e05858" stroke-width="2"/><ellipse cx="450.2" cy="348.1" rx="13.0" ry="8.6" transform="rotate(168.1 450.2 348.1)" fill="#9a5a5a" stroke="#e05858" stroke-width="1" fill-opacity="0.85"/><circle cx="450.2" cy="348.1" r="1.3" fill="#f4f4f4"/><line x1="477.3" y1="342.4" x2="470.2" y2="329.8" stroke="#e05858" stroke-width="2"/><ellipse cx="463.9" cy="318.6" rx="12.8" ry="8.0" transform="rotate(240.7 463.9 318.6)" fill="#9a5a5a" stroke="#e05858" stroke-width="1" fill-opacity="0.85"/><circle cx="463.9" cy="318.6" r="1.3" fill="#f4f4f4"/><line x1="477.3" y1="342.4" x2="482.6" y2="329.5" stroke="#e05858" stroke-width="2"/><ellipse cx="487.4" cy="318.0" rx="12.4" ry="7.4" transform="rotate(292.4 487.4 318.0)" fill="#9a5a5a" stroke="#e05858" stroke-width="1" fill-opacity="0.85"/><circle cx="487.4" cy="318.0" r="1.3" fill="#f4f4f4"/><line x1="477.3" y1="342.4" x2="487.8" y2="333.2" stroke="#e05858" stroke-width="2"/><ellipse cx="497.2" cy="325.0" rx="12.4" ry="8.1" transform="rotate(318.8 497.2 325.0)" fill="#9a5a5a" stroke="#e05858" stroke-width="1" fill-opacity="0.85"/><circle cx="497.2" cy="325.0" r="1.3" fill="#f4f4f4"/><line x1="477.3" y1="342.4" x2="489.9" y2="346.6" stroke="#e05858" stroke-width="2"/><ellipse cx="501.1" cy="350.4" rx="11.8" ry="7.5" transform="rotate(378.6 501.1 350.4)" fill="#9a5a5a" stroke="#e05858" stroke-width="1" fill-opacity="0.85"/><circle cx="501.1" cy="350.4" r="1.3" fill="#f4f4f4"/><circle cx="470.2" cy="358.4" r="3.8" fill="#9a5a5a" stroke="#e05858" stroke-width="1" fill-opacity="0.85"/><circle cx="477.4" cy="324.9" r="4.0" fill="#9a5a5a" stroke="#e05858" stroke-width="1" fill-opacity="0.85"/><circle cx="491.9" cy="335.1" r="5.2" fill="#9a5a5a" stroke="#e05858" stroke-width="1" fill-opacity="0.85"/><circle cx="477.3" cy="342.4" r="6.1" fill="#9a5a5a"/><rect x="448.6" y="306.8" width="14" height="4.5" fill="#1a1a1a"/><rect x="449.6" y="308.0" width="11" height="2" fill="#e05858"/></svg><div style="position:absolute;left:1073.6px;top:887.1px;width:575.9px;height:420.6px;border-radius:5px;box-shadow:inset 1px 1px 0 #6a7580, inset -1px -1px 0 #6a7580;"></div><div style="position:absolute;left:1617.00px;top:850.40px;width:31.60px;height:31.90px;background:#14171e;border-radius:8px;"></div><svg style="position:absolute;left:1627px;top:861px;" width="13" height="13" viewBox="0 0 13 13"><path d="M1.5 4.5 V1.5 H4.5 M8.5 1.5 H11.5 V4.5 M11.5 8.5 V11.5 H8.5 M4.5 11.5 H1.5 V8.5" stroke="#f0f0f0" stroke-width="1.6" fill="none"/></svg><span id="t108" class="t" style="left:492.60px;top:1319.74px;font-size:14.24px;line-height:14.24px;color:#a3a3a3;-webkit-text-stroke:0.22px currentColor;letter-spacing:0.000px;transform:scaleX(0.9507);transform-origin:0 0;">Original image: 105_6_2026-03-02_10-43-46_PS_Tray_1971_RGB2_FishEyeCorrected.png</span><span id="t109" class="t" style="left:1301.40px;top:1319.74px;font-size:14.24px;line-height:14.24px;color:#a3a3a3;-webkit-text-stroke:0.22px currentColor;letter-spacing:0.000px;transform:scaleX(0.9755);transform-origin:0 0;">Segmented overlay</span><span id="t110" class="t" style="left:1666.33px;top:902.11px;font-size:30.81px;line-height:30.81px;color:#fafafa;font-weight:700;letter-spacing:0.000px;transform:scaleX(0.8669);transform-origin:0 0;">Quick Summary</span><div style="position:absolute;left:1667.1px;top:952.9px;width:427.3px;height:415.1px;overflow:hidden;"><div style="position:absolute;left:0;top:0;width:427.3px;height:440px;border-radius:8px;background:#0f1117;box-shadow:inset 0 0 0 1px #2b2d35;"></div><div style="position:absolute;left:1px;top:1px;width:425.3px;height:37.3px;border-radius:7px 7px 0 0;background:#1a1c24;"></div><div style="position:absolute;left:0;top:37.80px;width:427.3px;height:1px;background:#2b2d35;"></div><div style="position:absolute;left:0;top:75.30px;width:427.3px;height:1px;background:#2b2d35;"></div><div style="position:absolute;left:0;top:112.80px;width:427.3px;height:1px;background:#2b2d35;"></div><div style="position:absolute;left:0;top:150.30px;width:427.3px;height:1px;background:#2b2d35;"></div><div style="position:absolute;left:0;top:187.80px;width:427.3px;height:1px;background:#2b2d35;"></div><div style="position:absolute;left:0;top:225.30px;width:427.3px;height:1px;background:#2b2d35;"></div><div style="position:absolute;left:0;top:262.80px;width:427.3px;height:1px;background:#2b2d35;"></div><div style="position:absolute;left:0;top:300.30px;width:427.3px;height:1px;background:#2b2d35;"></div><div style="position:absolute;left:0;top:337.80px;width:427.3px;height:1px;background:#2b2d35;"></div><div style="position:absolute;left:0;top:375.30px;width:427.3px;height:1px;background:#2b2d35;"></div><div style="position:absolute;left:0;top:412.80px;width:427.3px;height:1px;background:#2b2d35;"></div><div style="position:absolute;left:114.20px;top:0;width:1px;height:440px;background:#2b2d35;"></div><div style="position:absolute;left:253.70px;top:0;width:1px;height:440px;background:#2b2d35;"></div></div><span id="t111" class="t" style="left:1675.11px;top:965.15px;font-size:14.83px;line-height:14.83px;color:#9c9ea4;-webkit-text-stroke:0.22px currentColor;letter-spacing:0.000px;transform:scaleX(0.9894);transform-origin:0 0;">Plant</span><span id="t112" class="t" style="left:1789.93px;top:965.15px;font-size:14.83px;line-height:14.83px;color:#9c9ea4;-webkit-text-stroke:0.22px currentColor;letter-spacing:0.000px;transform:scaleX(0.9697);transform-origin:0 0;">Position</span><span id="t113" class="t" style="left:1928.27px;top:965.15px;font-size:14.83px;line-height:14.83px;color:#9c9ea4;-webkit-text-stroke:0.22px currentColor;letter-spacing:0.000px;transform:scaleX(0.9275);transform-origin:0 0;">Estimated Leaves</span><span id="t114" class="t" style="left:1675.46px;top:1002.62px;font-size:14.97px;line-height:14.97px;color:#fafafa;-webkit-text-stroke:0.22px currentColor;letter-spacing:0.000px;transform:scaleX(0.9387);transform-origin:0 0;">Plant 1</span><span id="t115" class="t" style="left:1790.12px;top:1002.62px;font-size:14.97px;line-height:14.97px;color:#fafafa;-webkit-text-stroke:0.22px currentColor;letter-spacing:0.000px;transform:scaleX(0.8760);transform-origin:0 0;">Row 1, Col 1</span><span id="t116" class="t" style="right:115.70px;top:1002.68px;font-size:14.90px;line-height:14.90px;color:#fafafa;-webkit-text-stroke:0.22px currentColor;letter-spacing:0.000px;">9</span><span id="t117" class="t" style="left:1675.46px;top:1040.12px;font-size:14.97px;line-height:14.97px;color:#fafafa;-webkit-text-stroke:0.22px currentColor;letter-spacing:0.000px;transform:scaleX(0.9387);transform-origin:0 0;">Plant 2</span><span id="t118" class="t" style="left:1790.12px;top:1040.12px;font-size:14.97px;line-height:14.97px;color:#fafafa;-webkit-text-stroke:0.22px currentColor;letter-spacing:0.000px;transform:scaleX(0.8760);transform-origin:0 0;">Row 1, Col 2</span><span id="t119" class="t" style="right:115.70px;top:1040.18px;font-size:14.90px;line-height:14.90px;color:#fafafa;-webkit-text-stroke:0.22px currentColor;letter-spacing:0.000px;">7</span><span id="t120" class="t" style="left:1675.46px;top:1077.62px;font-size:14.97px;line-height:14.97px;color:#fafafa;-webkit-text-stroke:0.22px currentColor;letter-spacing:0.000px;transform:scaleX(0.9387);transform-origin:0 0;">Plant 3</span><span id="t121" class="t" style="left:1790.12px;top:1077.62px;font-size:14.97px;line-height:14.97px;color:#fafafa;-webkit-text-stroke:0.22px currentColor;letter-spacing:0.000px;transform:scaleX(0.8760);transform-origin:0 0;">Row 1, Col 3</span><span id="t122" class="t" style="right:115.70px;top:1077.68px;font-size:14.90px;line-height:14.90px;color:#fafafa;-webkit-text-stroke:0.22px currentColor;letter-spacing:0.000px;">7</span><span id="t123" class="t" style="left:1675.46px;top:1115.12px;font-size:14.97px;line-height:14.97px;color:#fafafa;-webkit-text-stroke:0.22px currentColor;letter-spacing:0.000px;transform:scaleX(0.9387);transform-origin:0 0;">Plant 4</span><span id="t124" class="t" style="left:1790.12px;top:1115.12px;font-size:14.97px;line-height:14.97px;color:#fafafa;-webkit-text-stroke:0.22px currentColor;letter-spacing:0.000px;transform:scaleX(0.8760);transform-origin:0 0;">Row 1, Col 4</span><span id="t125" class="t" style="right:115.70px;top:1115.18px;font-size:14.90px;line-height:14.90px;color:#fafafa;-webkit-text-stroke:0.22px currentColor;letter-spacing:0.000px;">7</span><span id="t126" class="t" style="left:1675.46px;top:1152.62px;font-size:14.97px;line-height:14.97px;color:#fafafa;-webkit-text-stroke:0.22px currentColor;letter-spacing:0.000px;transform:scaleX(0.9387);transform-origin:0 0;">Plant 5</span><span id="t127" class="t" style="left:1790.12px;top:1152.62px;font-size:14.97px;line-height:14.97px;color:#fafafa;-webkit-text-stroke:0.22px currentColor;letter-spacing:0.000px;transform:scaleX(0.8760);transform-origin:0 0;">Row 1, Col 5</span><span id="t128" class="t" style="right:115.70px;top:1152.68px;font-size:14.90px;line-height:14.90px;color:#fafafa;-webkit-text-stroke:0.22px currentColor;letter-spacing:0.000px;">6</span><span id="t129" class="t" style="left:1675.46px;top:1190.12px;font-size:14.97px;line-height:14.97px;color:#fafafa;-webkit-text-stroke:0.22px currentColor;letter-spacing:0.000px;transform:scaleX(0.9387);transform-origin:0 0;">Plant 6</span><span id="t130" class="t" style="left:1790.12px;top:1190.12px;font-size:14.97px;line-height:14.97px;color:#fafafa;-webkit-text-stroke:0.22px currentColor;letter-spacing:0.000px;transform:scaleX(0.8760);transform-origin:0 0;">Row 2, Col 1</span><span id="t131" class="t" style="right:115.70px;top:1190.18px;font-size:14.90px;line-height:14.90px;color:#fafafa;-webkit-text-stroke:0.22px currentColor;letter-spacing:0.000px;">6</span><span id="t132" class="t" style="left:1675.46px;top:1227.62px;font-size:14.97px;line-height:14.97px;color:#fafafa;-webkit-text-stroke:0.22px currentColor;letter-spacing:0.000px;transform:scaleX(0.9387);transform-origin:0 0;">Plant 7</span><span id="t133" class="t" style="left:1790.12px;top:1227.62px;font-size:14.97px;line-height:14.97px;color:#fafafa;-webkit-text-stroke:0.22px currentColor;letter-spacing:0.000px;transform:scaleX(0.8760);transform-origin:0 0;">Row 2, Col 2</span><span id="t134" class="t" style="right:115.70px;top:1227.68px;font-size:14.90px;line-height:14.90px;color:#fafafa;-webkit-text-stroke:0.22px currentColor;letter-spacing:0.000px;">5</span><span id="t135" class="t" style="left:1675.46px;top:1265.12px;font-size:14.97px;line-height:14.97px;color:#fafafa;-webkit-text-stroke:0.22px currentColor;letter-spacing:0.000px;transform:scaleX(0.9387);transform-origin:0 0;">Plant 8</span><span id="t136" class="t" style="left:1790.12px;top:1265.12px;font-size:14.97px;line-height:14.97px;color:#fafafa;-webkit-text-stroke:0.22px currentColor;letter-spacing:0.000px;transform:scaleX(0.8760);transform-origin:0 0;">Row 2, Col 3</span><span id="t137" class="t" style="right:115.70px;top:1265.18px;font-size:14.90px;line-height:14.90px;color:#fafafa;-webkit-text-stroke:0.22px currentColor;letter-spacing:0.000px;">7</span><span id="t138" class="t" style="left:1675.46px;top:1302.62px;font-size:14.97px;line-height:14.97px;color:#fafafa;-webkit-text-stroke:0.22px currentColor;letter-spacing:0.000px;transform:scaleX(0.9387);transform-origin:0 0;">Plant 9</span><span id="t139" class="t" style="left:1790.12px;top:1302.62px;font-size:14.97px;line-height:14.97px;color:#fafafa;-webkit-text-stroke:0.22px currentColor;letter-spacing:0.000px;transform:scaleX(0.8760);transform-origin:0 0;">Row 2, Col 4</span><span id="t140" class="t" style="right:115.70px;top:1302.68px;font-size:14.90px;line-height:14.90px;color:#fafafa;-webkit-text-stroke:0.22px currentColor;letter-spacing:0.000px;">8</span><span id="t141" class="t" style="left:1675.46px;top:1340.12px;font-size:14.97px;line-height:14.97px;color:#fafafa;-webkit-text-stroke:0.22px currentColor;letter-spacing:0.000px;transform:scaleX(0.9403);transform-origin:0 0;">Plant 10</span><span id="t142" class="t" style="left:1790.12px;top:1340.12px;font-size:14.97px;line-height:14.97px;color:#fafafa;-webkit-text-stroke:0.22px currentColor;letter-spacing:0.000px;transform:scaleX(0.8760);transform-origin:0 0;">Row 2, Col 5</span><span id="t143" class="t" style="right:115.70px;top:1340.18px;font-size:14.90px;line-height:14.90px;color:#fafafa;-webkit-text-stroke:0.22px currentColor;letter-spacing:0.000px;">6</span></body></html>
